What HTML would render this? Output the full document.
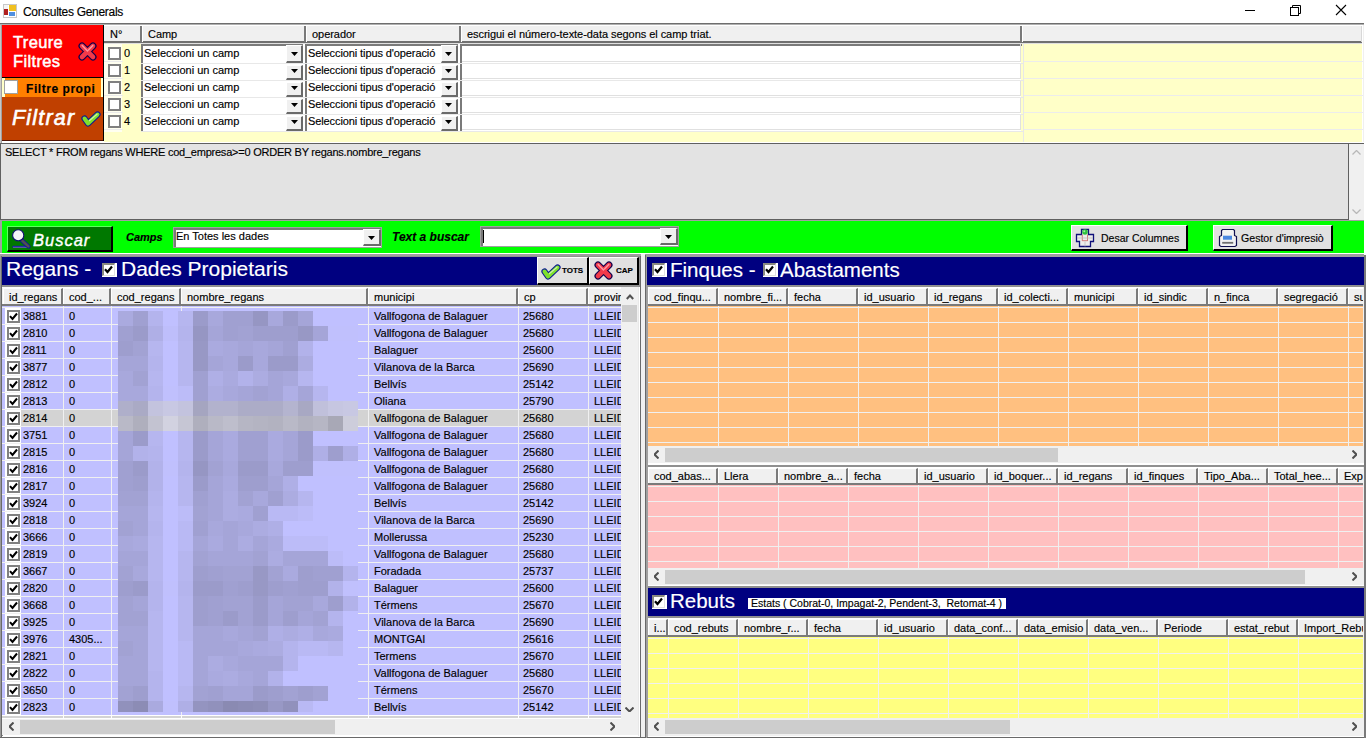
<!DOCTYPE html><html><head><meta charset="utf-8"><style>
*{margin:0;padding:0;box-sizing:border-box}
html,body{width:1366px;height:738px;overflow:hidden;background:#fff;position:relative;font-family:"Liberation Sans", sans-serif;font-size:11px;color:#000}
div{position:absolute}
.t{white-space:nowrap;line-height:1;-webkit-text-stroke:0.15px currentColor}
</style></head><body><svg style="position:absolute;left:3px;top:4px" width="15" height="14" viewBox="0 0 15 14"><rect x="0.5" y="0.5" width="13" height="13" fill="#fff" stroke="#c8c8c8"/><rect x="1" y="1" width="4" height="4" fill="#f4f4f4"/><rect x="6" y="1" width="7" height="6" fill="#f0c020"/><rect x="1" y="5" width="4" height="6" fill="#b02020"/><rect x="6" y="8" width="6" height="4" fill="#5090e0"/></svg>
<div class="t" style="left:23px;top:6px;font-size:12px;letter-spacing:-0.3px">Consultes Generals</div>
<svg style="position:absolute;left:1240px;top:3px" width="120" height="16" viewBox="0 0 120 16"><line x1="5" y1="7.5" x2="15" y2="7.5" stroke="#000"/><rect x="50.5" y="4.5" width="8" height="8" fill="none" stroke="#000"/><path d="M52.5 4.5V2.5H60.5V10.5H58.5" fill="none" stroke="#000"/><path d="M96 2L106 12M106 2L96 12" stroke="#000" stroke-width="1.1"/></svg>
<div style="left:0px;top:23px;width:1364px;height:1px;background:#6e6e6e;"></div>
<div style="left:0px;top:24px;width:1364px;height:1px;background:#b0b0b0;"></div>
<div style="left:0px;top:25px;width:1px;height:118px;background:#c8c8c8;"></div>
<div style="left:1px;top:25px;width:1px;height:118px;background:#a0a0a0;"></div>
<div style="left:2px;top:25px;width:101px;height:52px;background:#ff0000;"></div>
<div class="t" style="left:13px;top:34px;font-size:16.5px;letter-spacing:0.35px;color:#fff;-webkit-text-stroke:0.5px #fff">Treure</div>
<div class="t" style="left:13px;top:53px;font-size:16.5px;letter-spacing:0.35px;color:#fff;-webkit-text-stroke:0.5px #fff">Filtres</div>
<svg style="position:absolute;left:78px;top:42px" width="19" height="19" viewBox="0 0 19 19"><g stroke-linecap="round"><path d="M4 4L15 15M15 4L4 15" stroke="#14004a" stroke-width="7"/><path d="M4 4L15 15M15 4L4 15" stroke="#f23a4a" stroke-width="4.6"/><path d="M4.2 3.6L9.5 8.9M14.8 3.6L10.5 7.9" stroke="#ff9aa4" stroke-width="1.4"/></g></svg>
<div style="left:103px;top:25px;width:1px;height:117px;background:#000;"></div>
<div style="left:2px;top:77px;width:101px;height:1px;background:#000;"></div>
<div style="left:2px;top:78px;width:101px;height:19px;background:#ffffc8;"></div>
<div style="left:5px;top:78px;width:96px;height:19px;background:#ff8000;"></div>
<div style="left:4px;top:80px;width:14px;height:14px;background:#fff;border:1px solid #a0a0a0"></div>
<div class="t" style="left:26px;top:83px;font-size:12px;font-weight:bold;letter-spacing:0.55px">Filtre propi</div>
<div style="left:2px;top:97px;width:101px;height:43px;background:#c04000;"></div>
<div style="left:2px;top:140px;width:101px;height:1px;background:#501000;"></div>
<div style="left:2px;top:141px;width:102px;height:2px;background:#fff;"></div>
<div class="t" style="left:12px;top:108px;font-size:21.5px;font-style:italic;letter-spacing:1.2px;color:#fff;-webkit-text-stroke:0.6px #fff">Filtrar</div>
<svg style="position:absolute;left:81px;top:111px" width="20" height="16" viewBox="0 0 20 16"><g stroke-linecap="round" stroke-linejoin="round" fill="none"><path d="M3.5 7.5L7 12.5L16.5 3.5" stroke="#0a1a90" stroke-width="6.2"/><path d="M3.5 7.5L7 12.5L16.5 3.5" stroke="#7ee02c" stroke-width="4"/><path d="M8.5 9.5L16 3.2" stroke="#c8f0a8" stroke-width="1.3"/></g></svg>
<div style="left:104px;top:25px;width:1260px;height:117px;background:#ffffc8;"></div>
<div style="left:1362px;top:25px;width:1px;height:117px;background:#fff;"></div>
<div style="left:1363px;top:25px;width:1px;height:117px;background:#f0f0f0;"></div>
<div style="left:104px;top:25px;width:1258px;height:17px;background:#f0f0f0;"></div>
<div style="left:104px;top:25px;width:1258px;height:1px;background:#fff;"></div>
<div style="left:104px;top:41px;width:1258px;height:2px;background:#707070;"></div>
<div style="left:104px;top:43px;width:1258px;height:1px;background:#e0e0e0;"></div>
<div style="left:140px;top:26px;width:2px;height:16px;background:#7a7a7a;"></div>
<div style="left:142px;top:26px;width:1px;height:16px;background:#fff;"></div>
<div class="t" style="left:110px;top:29px;letter-spacing:-0.05px">N°</div>
<div style="left:304px;top:26px;width:2px;height:16px;background:#7a7a7a;"></div>
<div style="left:306px;top:26px;width:1px;height:16px;background:#fff;"></div>
<div class="t" style="left:148px;top:29px;letter-spacing:-0.05px">Camp</div>
<div style="left:459px;top:26px;width:2px;height:16px;background:#7a7a7a;"></div>
<div style="left:461px;top:26px;width:1px;height:16px;background:#fff;"></div>
<div class="t" style="left:312px;top:29px;letter-spacing:-0.05px">operador</div>
<div style="left:1020px;top:26px;width:2px;height:16px;background:#7a7a7a;"></div>
<div style="left:1022px;top:26px;width:1px;height:16px;background:#fff;"></div>
<div class="t" style="left:467px;top:29px;letter-spacing:-0.05px">escrigui el número-texte-data segons el camp triat.</div>
<div style="left:1361px;top:26px;width:1px;height:16px;background:#d8d8d8;"></div>
<div style="left:104px;top:44px;width:18px;height:88px;background:#fffff0;"></div>
<div style="left:104px;top:61px;width:19px;height:1px;background:#ececec;"></div>
<div style="left:1023px;top:61px;width:340px;height:1px;background:#ececec;"></div>
<div style="left:108px;top:47px;width:13px;height:13px;background:#fff;border:2px solid #808080"></div>
<div class="t" style="left:124px;top:48px;">0</div>
<div style="left:141px;top:44px;width:880px;height:19px;background:#fff;"></div>
<div style="left:141px;top:63px;width:882px;height:1px;background:#e8e8e8;"></div>
<div style="left:141px;top:44px;width:2px;height:19px;background:#7a7a7a;"></div>
<div style="left:141px;top:44px;width:162px;height:2px;background:#7a7a7a;"></div>
<div class="t" style="left:144px;top:48px;">Seleccioni un camp</div>
<div style="left:286px;top:45px;width:17px;height:18px;background:#f0f0f0;border-top:1px solid #fff;border-left:1px solid #fff;border-right:2px solid #6a6a6a;border-bottom:2px solid #6a6a6a"></div>
<svg style="position:absolute;left:291px;top:52px" width="7" height="4" viewBox="0 0 7 4"><path d="M0 0H7L3.5 4Z" fill="#000"/></svg>
<div style="left:305px;top:44px;width:2px;height:19px;background:#7a7a7a;"></div>
<div style="left:305px;top:44px;width:153px;height:2px;background:#7a7a7a;"></div>
<div class="t" style="left:308px;top:48px;letter-spacing:-0.1px">Seleccioni tipus d'operació</div>
<div style="left:441px;top:45px;width:17px;height:18px;background:#f0f0f0;border-top:1px solid #fff;border-left:1px solid #fff;border-right:2px solid #6a6a6a;border-bottom:2px solid #6a6a6a"></div>
<svg style="position:absolute;left:445px;top:52px" width="7" height="4" viewBox="0 0 7 4"><path d="M0 0H7L3.5 4Z" fill="#000"/></svg>
<div style="left:460px;top:44px;width:2px;height:19px;background:#7a7a7a;"></div>
<div style="left:460px;top:44px;width:562px;height:2px;background:#7a7a7a;"></div>
<div style="left:1020px;top:44px;width:1px;height:18px;background:#e0e0e0;"></div>
<div style="left:462px;top:61px;width:559px;height:1px;background:#e0e0e0;"></div>
<div style="left:104px;top:78px;width:19px;height:1px;background:#ececec;"></div>
<div style="left:1023px;top:78px;width:340px;height:1px;background:#ececec;"></div>
<div style="left:108px;top:64px;width:13px;height:13px;background:#fff;border:2px solid #808080"></div>
<div class="t" style="left:124px;top:65px;">1</div>
<div style="left:141px;top:64px;width:880px;height:16px;background:#fff;"></div>
<div style="left:141px;top:80px;width:882px;height:1px;background:#e8e8e8;"></div>
<div style="left:141px;top:64px;width:2px;height:16px;background:#7a7a7a;"></div>
<div class="t" style="left:144px;top:65px;">Seleccioni un camp</div>
<div style="left:286px;top:65px;width:17px;height:15px;background:#f0f0f0;border-top:1px solid #fff;border-left:1px solid #fff;border-right:2px solid #6a6a6a;border-bottom:2px solid #6a6a6a"></div>
<svg style="position:absolute;left:291px;top:69px" width="7" height="4" viewBox="0 0 7 4"><path d="M0 0H7L3.5 4Z" fill="#000"/></svg>
<div style="left:305px;top:64px;width:2px;height:16px;background:#7a7a7a;"></div>
<div class="t" style="left:308px;top:65px;letter-spacing:-0.1px">Seleccioni tipus d'operació</div>
<div style="left:441px;top:65px;width:17px;height:15px;background:#f0f0f0;border-top:1px solid #fff;border-left:1px solid #fff;border-right:2px solid #6a6a6a;border-bottom:2px solid #6a6a6a"></div>
<svg style="position:absolute;left:445px;top:69px" width="7" height="4" viewBox="0 0 7 4"><path d="M0 0H7L3.5 4Z" fill="#000"/></svg>
<div style="left:460px;top:64px;width:2px;height:16px;background:#7a7a7a;"></div>
<div style="left:1020px;top:64px;width:1px;height:15px;background:#e0e0e0;"></div>
<div style="left:462px;top:78px;width:559px;height:1px;background:#e0e0e0;"></div>
<div style="left:104px;top:95px;width:19px;height:1px;background:#ececec;"></div>
<div style="left:1023px;top:95px;width:340px;height:1px;background:#ececec;"></div>
<div style="left:108px;top:81px;width:13px;height:13px;background:#fff;border:2px solid #808080"></div>
<div class="t" style="left:124px;top:82px;">2</div>
<div style="left:141px;top:81px;width:880px;height:16px;background:#fff;"></div>
<div style="left:141px;top:97px;width:882px;height:1px;background:#e8e8e8;"></div>
<div style="left:141px;top:81px;width:2px;height:16px;background:#7a7a7a;"></div>
<div class="t" style="left:144px;top:82px;">Seleccioni un camp</div>
<div style="left:286px;top:82px;width:17px;height:15px;background:#f0f0f0;border-top:1px solid #fff;border-left:1px solid #fff;border-right:2px solid #6a6a6a;border-bottom:2px solid #6a6a6a"></div>
<svg style="position:absolute;left:291px;top:86px" width="7" height="4" viewBox="0 0 7 4"><path d="M0 0H7L3.5 4Z" fill="#000"/></svg>
<div style="left:305px;top:81px;width:2px;height:16px;background:#7a7a7a;"></div>
<div class="t" style="left:308px;top:82px;letter-spacing:-0.1px">Seleccioni tipus d'operació</div>
<div style="left:441px;top:82px;width:17px;height:15px;background:#f0f0f0;border-top:1px solid #fff;border-left:1px solid #fff;border-right:2px solid #6a6a6a;border-bottom:2px solid #6a6a6a"></div>
<svg style="position:absolute;left:445px;top:86px" width="7" height="4" viewBox="0 0 7 4"><path d="M0 0H7L3.5 4Z" fill="#000"/></svg>
<div style="left:460px;top:81px;width:2px;height:16px;background:#7a7a7a;"></div>
<div style="left:1020px;top:81px;width:1px;height:15px;background:#e0e0e0;"></div>
<div style="left:462px;top:95px;width:559px;height:1px;background:#e0e0e0;"></div>
<div style="left:104px;top:112px;width:19px;height:1px;background:#ececec;"></div>
<div style="left:1023px;top:112px;width:340px;height:1px;background:#ececec;"></div>
<div style="left:108px;top:98px;width:13px;height:13px;background:#fff;border:2px solid #808080"></div>
<div class="t" style="left:124px;top:99px;">3</div>
<div style="left:141px;top:98px;width:880px;height:16px;background:#fff;"></div>
<div style="left:141px;top:114px;width:882px;height:1px;background:#e8e8e8;"></div>
<div style="left:141px;top:98px;width:2px;height:16px;background:#7a7a7a;"></div>
<div class="t" style="left:144px;top:99px;">Seleccioni un camp</div>
<div style="left:286px;top:99px;width:17px;height:15px;background:#f0f0f0;border-top:1px solid #fff;border-left:1px solid #fff;border-right:2px solid #6a6a6a;border-bottom:2px solid #6a6a6a"></div>
<svg style="position:absolute;left:291px;top:103px" width="7" height="4" viewBox="0 0 7 4"><path d="M0 0H7L3.5 4Z" fill="#000"/></svg>
<div style="left:305px;top:98px;width:2px;height:16px;background:#7a7a7a;"></div>
<div class="t" style="left:308px;top:99px;letter-spacing:-0.1px">Seleccioni tipus d'operació</div>
<div style="left:441px;top:99px;width:17px;height:15px;background:#f0f0f0;border-top:1px solid #fff;border-left:1px solid #fff;border-right:2px solid #6a6a6a;border-bottom:2px solid #6a6a6a"></div>
<svg style="position:absolute;left:445px;top:103px" width="7" height="4" viewBox="0 0 7 4"><path d="M0 0H7L3.5 4Z" fill="#000"/></svg>
<div style="left:460px;top:98px;width:2px;height:16px;background:#7a7a7a;"></div>
<div style="left:1020px;top:98px;width:1px;height:15px;background:#e0e0e0;"></div>
<div style="left:462px;top:112px;width:559px;height:1px;background:#e0e0e0;"></div>
<div style="left:104px;top:129px;width:19px;height:1px;background:#ececec;"></div>
<div style="left:1023px;top:129px;width:340px;height:1px;background:#ececec;"></div>
<div style="left:108px;top:115px;width:13px;height:13px;background:#fff;border:2px solid #808080"></div>
<div class="t" style="left:124px;top:116px;">4</div>
<div style="left:141px;top:115px;width:880px;height:16px;background:#fff;"></div>
<div style="left:141px;top:131px;width:882px;height:1px;background:#e8e8e8;"></div>
<div style="left:141px;top:115px;width:2px;height:16px;background:#7a7a7a;"></div>
<div class="t" style="left:144px;top:116px;">Seleccioni un camp</div>
<div style="left:286px;top:116px;width:17px;height:15px;background:#f0f0f0;border-top:1px solid #fff;border-left:1px solid #fff;border-right:2px solid #6a6a6a;border-bottom:2px solid #6a6a6a"></div>
<svg style="position:absolute;left:291px;top:120px" width="7" height="4" viewBox="0 0 7 4"><path d="M0 0H7L3.5 4Z" fill="#000"/></svg>
<div style="left:305px;top:115px;width:2px;height:16px;background:#7a7a7a;"></div>
<div class="t" style="left:308px;top:116px;letter-spacing:-0.1px">Seleccioni tipus d'operació</div>
<div style="left:441px;top:116px;width:17px;height:15px;background:#f0f0f0;border-top:1px solid #fff;border-left:1px solid #fff;border-right:2px solid #6a6a6a;border-bottom:2px solid #6a6a6a"></div>
<svg style="position:absolute;left:445px;top:120px" width="7" height="4" viewBox="0 0 7 4"><path d="M0 0H7L3.5 4Z" fill="#000"/></svg>
<div style="left:460px;top:115px;width:2px;height:16px;background:#7a7a7a;"></div>
<div style="left:1020px;top:115px;width:1px;height:15px;background:#e0e0e0;"></div>
<div style="left:462px;top:129px;width:559px;height:1px;background:#e0e0e0;"></div>
<div style="left:1023px;top:44px;width:1px;height:98px;background:#e8e8e8;"></div>
<div style="left:0px;top:143px;width:1364px;height:1px;background:#606060;"></div>
<div style="left:0px;top:144px;width:1px;height:76px;background:#606060;"></div>
<div style="left:1px;top:144px;width:1348px;height:75px;background:#e3e3e3;"></div>
<div style="left:1348px;top:144px;width:1px;height:75px;background:#606060;"></div>
<div style="left:1349px;top:144px;width:15px;height:76px;background:#f0f0f0;"></div>
<svg style="position:absolute;left:1352px;top:150px" width="9" height="5" viewBox="0 0 9 5"><path d="M0.5 4.5L4.5 0.5L8.5 4.5" fill="none" stroke="#b8b8b8" stroke-width="1.3"/></svg>
<svg style="position:absolute;left:1352px;top:209px" width="9" height="5" viewBox="0 0 9 5"><path d="M0.5 0.5L4.5 4.5L8.5 0.5" fill="none" stroke="#b8b8b8" stroke-width="1.3"/></svg>
<div style="left:1px;top:219px;width:1348px;height:1px;background:#606060;"></div>
<div class="t" style="left:5px;top:147px;letter-spacing:-0.23px">SELECT * FROM regans WHERE cod_empresa&gt;=0 ORDER BY regans.nombre_regans</div>
<div style="left:0px;top:220px;width:1364px;height:1px;background:#a0a0a0;"></div>
<div style="left:0px;top:221px;width:2px;height:32px;background:#a0a0a0;"></div>
<div style="left:2px;top:221px;width:1362px;height:32px;background:#00ff00;"></div>
<div style="left:0px;top:253px;width:1366px;height:1px;background:#fff;"></div>
<div style="left:7px;top:226px;width:106px;height:26px;background:#007800;border-top:1px solid #60ff60;border-left:1px solid #60ff60;border-right:2px solid #000;border-bottom:2px solid #000"></div>
<svg style="position:absolute;left:8px;top:226px" width="28" height="26" viewBox="0 0 28 26"><path d="M4.5 20.8H21" stroke="#1818b0" stroke-width="2"/><path d="M5 21.3H21" stroke="#8080a0" stroke-width="0.8"/><path d="M14 14.5L20.5 20.5" stroke="#1010a0" stroke-width="4.2" stroke-linecap="round"/><path d="M14 14.5L20.5 20.5" stroke="#505050" stroke-width="2.4" stroke-linecap="round"/><circle cx="10.2" cy="9.3" r="5.6" fill="#f4f4f8" stroke="#101070" stroke-width="1.1"/></svg>
<div class="t" style="left:33px;top:232px;font-size:16.5px;font-style:italic;color:#fff;letter-spacing:1px;-webkit-text-stroke:0.4px #fff">Buscar</div>
<div class="t" style="left:126px;top:232px;font-size:11px;font-style:italic;font-weight:bold">Camps</div>
<div style="left:173px;top:227px;width:209px;height:21px;background:#fff;border:1px solid #a0a0a0"></div>
<div style="left:174px;top:228px;width:207px;height:2px;background:#7a7a7a;"></div>
<div style="left:174px;top:228px;width:2px;height:19px;background:#7a7a7a;"></div>
<div class="t" style="left:176px;top:231px;">En Totes les dades</div>
<div style="left:363px;top:229px;width:18px;height:17px;background:#f0f0f0;border-top:1px solid #fff;border-left:1px solid #fff;border-right:2px solid #6a6a6a;border-bottom:2px solid #6a6a6a"></div>
<svg style="position:absolute;left:368px;top:236px" width="7" height="4" viewBox="0 0 7 4"><path d="M0 0H7L3.5 4Z" fill="#000"/></svg>
<div class="t" style="left:392px;top:231px;font-size:12px;font-style:italic;font-weight:bold">Text a buscar</div>
<div style="left:480px;top:226px;width:199px;height:21px;background:#fff;border:1px solid #a0a0a0"></div>
<div style="left:481px;top:227px;width:197px;height:2px;background:#7a7a7a;"></div>
<div style="left:481px;top:227px;width:2px;height:19px;background:#7a7a7a;"></div>
<div style="left:483px;top:230px;width:1px;height:13px;background:#000;"></div>
<div style="left:660px;top:228px;width:18px;height:17px;background:#f0f0f0;border-top:1px solid #fff;border-left:1px solid #fff;border-right:2px solid #6a6a6a;border-bottom:2px solid #6a6a6a"></div>
<svg style="position:absolute;left:665px;top:235px" width="7" height="4" viewBox="0 0 7 4"><path d="M0 0H7L3.5 4Z" fill="#000"/></svg>
<div style="left:1071px;top:225px;width:117px;height:26px;background:#e1e1e1;border-top:1px solid #fff;border-left:1px solid #fff;border-right:2px solid #000;border-bottom:2px solid #000"></div>
<svg style="position:absolute;left:1073px;top:227px" width="24" height="22" viewBox="0 0 24 22"><path d="M8.5 2.5H15.5V7.5H20.5V14.5H17.5V19.5H6.5V14.5H3.5V7.5H8.5Z" fill="#ececec" stroke="#10107a" stroke-width="1.3"/><path d="M9.3 7.5V14M14.5 7.5V14M9.3 13.7H14.5" stroke="#d07070" stroke-width="0.9" fill="none"/><path d="M12 14.5V19.5M4 11H20" stroke="#b8b8b8" stroke-width="0.7"/><circle cx="12" cy="5" r="2.8" fill="#30c040"/><circle cx="11.3" cy="4.3" r="1" fill="#a0f0a0"/></svg>
<div class="t" style="left:1101px;top:233px;font-size:10.5px">Desar Columnes</div>
<div style="left:1213px;top:225px;width:120px;height:26px;background:#e1e1e1;border-top:1px solid #fff;border-left:1px solid #fff;border-right:2px solid #000;border-bottom:2px solid #000"></div>
<svg style="position:absolute;left:1215px;top:227px" width="24" height="22" viewBox="0 0 24 22"><path d="M7.5 2.5H18.5L19.5 3.5V8.5L21.5 9.5V18.5L20 19.5H6L4.5 18.5V9.5L6.5 8.5V3.5Z" fill="#f2f2f2" stroke="#101050" stroke-width="1.2"/><rect x="8" y="8.7" width="9" height="4" fill="#4a88e0"/><rect x="7.2" y="14.9" width="11" height="1.8" fill="#707070"/></svg>
<div class="t" style="left:1241px;top:233px;font-size:10.6px">Gestor d'impresiò</div>
<div style="left:0px;top:254px;width:641px;height:2px;background:#a0a0a0;"></div>
<div style="left:0px;top:256px;width:2px;height:482px;background:#a0a0a0;"></div>
<div style="left:641px;top:254px;width:4px;height:484px;background:#f0f0f0;"></div>
<div style="left:2px;top:256px;width:638px;height:1px;background:#909090;"></div>
<div style="left:2px;top:257px;width:535px;height:28px;background:#000080;"></div>
<div class="t" style="left:6px;top:258px;font-size:21px;color:#fff">Regans - </div>
<div style="left:102px;top:263px;width:15px;height:14px;background:#fff;"></div>
<div style="left:102px;top:263px;width:13px;height:13px;background:#fff;border-top:2px solid #8a8a80;border-left:2px solid #8a8a80;border-right:1px solid #e0e0e0;border-bottom:1px solid #e0e0e0"></div>
<svg style="position:absolute;left:104px;top:265px" width="9" height="9" viewBox="0 0 9 9"><path d="M1 4.2L3.5 7L8 1.5" fill="none" stroke="#000" stroke-width="2.2"/></svg>
<div class="t" style="left:121px;top:258px;font-size:21px;color:#fff">Dades Propietaris</div>
<div style="left:537px;top:257px;width:52px;height:28px;background:#e1e1e1;border-top:1px solid #fff;border-left:1px solid #fff;border-right:2px solid #000;border-bottom:2px solid #000"></div>
<svg style="position:absolute;left:541px;top:264px" width="20" height="16" viewBox="0 0 20 16"><g stroke-linecap="round" stroke-linejoin="round" fill="none"><path d="M3.5 7.5L7 12.5L16.5 3.5" stroke="#0a1a90" stroke-width="6.2"/><path d="M3.5 7.5L7 12.5L16.5 3.5" stroke="#7ee02c" stroke-width="4"/><path d="M8.5 9.5L16 3.2" stroke="#c8f0a8" stroke-width="1.3"/></g></svg>
<div class="t" style="left:562px;top:267px;font-size:8px;font-weight:bold">TOTS</div>
<div style="left:589px;top:257px;width:50px;height:28px;background:#e1e1e1;border-top:1px solid #fff;border-left:1px solid #fff;border-right:2px solid #000;border-bottom:2px solid #000"></div>
<svg style="position:absolute;left:594px;top:261px" width="19" height="19" viewBox="0 0 19 19"><g stroke-linecap="round"><path d="M4 4L15 15M15 4L4 15" stroke="#14004a" stroke-width="7"/><path d="M4 4L15 15M15 4L4 15" stroke="#f23a4a" stroke-width="4.6"/><path d="M4.2 3.6L9.5 8.9M14.8 3.6L10.5 7.9" stroke="#ff9aa4" stroke-width="1.4"/></g></svg>
<div class="t" style="left:616px;top:267px;font-size:8px;font-weight:bold">CAP</div>
<div style="left:639px;top:257px;width:1px;height:28px;background:#909090;"></div>
<div style="left:2px;top:285px;width:638px;height:2px;background:#909090;"></div>
<div style="left:640px;top:256px;width:1px;height:482px;background:#6a6a6a;"></div>
<div style="left:0px;top:256px;width:1px;height:481px;background:#9a9a9a;"></div>
<div style="left:1px;top:256px;width:1px;height:481px;background:#6a6a6a;"></div>
<div style="left:2px;top:287px;width:1px;height:449px;background:#8a8a8a;"></div>
<div style="left:2px;top:287px;width:619px;height:19px;background:#f0f0f0;"></div>
<div style="left:2px;top:287px;width:619px;height:1px;background:#fff;"></div>
<div style="left:3px;top:288px;width:60px;height:17px;background:#f0f0f0;border-top:1px solid #fff;border-left:1px solid #fff;border-right:2px solid #7a7a7a"></div>
<div class="t" style="left:9px;top:292px;">id_regans</div>
<div style="left:63px;top:288px;width:48px;height:17px;background:#f0f0f0;border-top:1px solid #fff;border-left:1px solid #fff;border-right:2px solid #7a7a7a"></div>
<div class="t" style="left:69px;top:292px;">cod_...</div>
<div style="left:111px;top:288px;width:70px;height:17px;background:#f0f0f0;border-top:1px solid #fff;border-left:1px solid #fff;border-right:2px solid #7a7a7a"></div>
<div class="t" style="left:117px;top:292px;">cod_regans</div>
<div style="left:181px;top:288px;width:187px;height:17px;background:#f0f0f0;border-top:1px solid #fff;border-left:1px solid #fff;border-right:2px solid #7a7a7a"></div>
<div class="t" style="left:187px;top:292px;">nombre_regans</div>
<div style="left:368px;top:288px;width:150px;height:17px;background:#f0f0f0;border-top:1px solid #fff;border-left:1px solid #fff;border-right:2px solid #7a7a7a"></div>
<div class="t" style="left:374px;top:292px;">municipi</div>
<div style="left:518px;top:288px;width:70px;height:17px;background:#f0f0f0;border-top:1px solid #fff;border-left:1px solid #fff;border-right:2px solid #7a7a7a"></div>
<div class="t" style="left:524px;top:292px;">cp</div>
<div style="left:588px;top:288px;width:33px;height:17px;background:#f0f0f0;border-top:1px solid #fff;border-left:1px solid #fff"></div>
<div class="t" style="left:594px;top:292px;">provir</div>
<div style="left:2px;top:304px;width:619px;height:2px;background:#7a7a7a;"></div>
<div style="left:2px;top:306px;width:619px;height:412px;overflow:hidden;background:#c0c0ff">
<div style="left:0;top:1px;width:619px;height:1px;background:#f0f0f0"></div>
<div style="left:0;top:2px;width:619px;height:16px;background:#c0c0ff"></div>
<div style="left:0;top:2px;width:3px;height:16px;background:#c0c0ff"></div>
<div style="left:3px;top:2px;width:16px;height:16px;background:#fff"></div>
<div style="left:5px;top:4px;width:13px;height:13px;background:#fff;border:2px solid #808080"></div>
<svg style="position:absolute;left:7px;top:6px" width="9" height="9" viewBox="0 0 9 9"><path d="M1 4.2L3.5 7L8 1.5" fill="none" stroke="#000" stroke-width="2"/></svg>
<div class="t" style="left:21px;top:5px">3881</div>
<div class="t" style="left:67px;top:5px">0</div>
<div class="t" style="left:372px;top:5px">Vallfogona de Balaguer</div>
<div class="t" style="left:521px;top:5px">25680</div>
<div class="t" style="left:592px;top:5px">LLEIDA</div>
<div style="left:0;top:18px;width:619px;height:1px;background:#f0f0f0"></div>
<div style="left:0;top:19px;width:619px;height:16px;background:#c0c0ff"></div>
<div style="left:0;top:19px;width:3px;height:16px;background:#c0c0ff"></div>
<div style="left:3px;top:19px;width:16px;height:16px;background:#fff"></div>
<div style="left:5px;top:21px;width:13px;height:13px;background:#fff;border:2px solid #808080"></div>
<svg style="position:absolute;left:7px;top:23px" width="9" height="9" viewBox="0 0 9 9"><path d="M1 4.2L3.5 7L8 1.5" fill="none" stroke="#000" stroke-width="2"/></svg>
<div class="t" style="left:21px;top:22px">2810</div>
<div class="t" style="left:67px;top:22px">0</div>
<div class="t" style="left:372px;top:22px">Vallfogona de Balaguer</div>
<div class="t" style="left:521px;top:22px">25680</div>
<div class="t" style="left:592px;top:22px">LLEIDA</div>
<div style="left:0;top:35px;width:619px;height:1px;background:#f0f0f0"></div>
<div style="left:0;top:36px;width:619px;height:16px;background:#c0c0ff"></div>
<div style="left:0;top:36px;width:3px;height:16px;background:#c0c0ff"></div>
<div style="left:3px;top:36px;width:16px;height:16px;background:#fff"></div>
<div style="left:5px;top:38px;width:13px;height:13px;background:#fff;border:2px solid #808080"></div>
<svg style="position:absolute;left:7px;top:40px" width="9" height="9" viewBox="0 0 9 9"><path d="M1 4.2L3.5 7L8 1.5" fill="none" stroke="#000" stroke-width="2"/></svg>
<div class="t" style="left:21px;top:39px">2811</div>
<div class="t" style="left:67px;top:39px">0</div>
<div class="t" style="left:372px;top:39px">Balaguer</div>
<div class="t" style="left:521px;top:39px">25600</div>
<div class="t" style="left:592px;top:39px">LLEIDA</div>
<div style="left:0;top:52px;width:619px;height:1px;background:#f0f0f0"></div>
<div style="left:0;top:53px;width:619px;height:16px;background:#c0c0ff"></div>
<div style="left:0;top:53px;width:3px;height:16px;background:#c0c0ff"></div>
<div style="left:3px;top:53px;width:16px;height:16px;background:#fff"></div>
<div style="left:5px;top:55px;width:13px;height:13px;background:#fff;border:2px solid #808080"></div>
<svg style="position:absolute;left:7px;top:57px" width="9" height="9" viewBox="0 0 9 9"><path d="M1 4.2L3.5 7L8 1.5" fill="none" stroke="#000" stroke-width="2"/></svg>
<div class="t" style="left:21px;top:56px">3877</div>
<div class="t" style="left:67px;top:56px">0</div>
<div class="t" style="left:372px;top:56px">Vilanova de la Barca</div>
<div class="t" style="left:521px;top:56px">25690</div>
<div class="t" style="left:592px;top:56px">LLEIDA</div>
<div style="left:0;top:69px;width:619px;height:1px;background:#f0f0f0"></div>
<div style="left:0;top:70px;width:619px;height:16px;background:#c0c0ff"></div>
<div style="left:0;top:70px;width:3px;height:16px;background:#c0c0ff"></div>
<div style="left:3px;top:70px;width:16px;height:16px;background:#fff"></div>
<div style="left:5px;top:72px;width:13px;height:13px;background:#fff;border:2px solid #808080"></div>
<svg style="position:absolute;left:7px;top:74px" width="9" height="9" viewBox="0 0 9 9"><path d="M1 4.2L3.5 7L8 1.5" fill="none" stroke="#000" stroke-width="2"/></svg>
<div class="t" style="left:21px;top:73px">2812</div>
<div class="t" style="left:67px;top:73px">0</div>
<div class="t" style="left:372px;top:73px">Bellvís</div>
<div class="t" style="left:521px;top:73px">25142</div>
<div class="t" style="left:592px;top:73px">LLEIDA</div>
<div style="left:0;top:86px;width:619px;height:1px;background:#f0f0f0"></div>
<div style="left:0;top:87px;width:619px;height:16px;background:#c0c0ff"></div>
<div style="left:0;top:87px;width:3px;height:16px;background:#c0c0ff"></div>
<div style="left:3px;top:87px;width:16px;height:16px;background:#fff"></div>
<div style="left:5px;top:89px;width:13px;height:13px;background:#fff;border:2px solid #808080"></div>
<svg style="position:absolute;left:7px;top:91px" width="9" height="9" viewBox="0 0 9 9"><path d="M1 4.2L3.5 7L8 1.5" fill="none" stroke="#000" stroke-width="2"/></svg>
<div class="t" style="left:21px;top:90px">2813</div>
<div class="t" style="left:67px;top:90px">0</div>
<div class="t" style="left:372px;top:90px">Oliana</div>
<div class="t" style="left:521px;top:90px">25790</div>
<div class="t" style="left:592px;top:90px">LLEIDA</div>
<div style="left:0;top:103px;width:619px;height:1px;background:#f0f0f0"></div>
<div style="left:0;top:104px;width:619px;height:16px;background:#d3d3d3"></div>
<div style="left:0;top:104px;width:3px;height:16px;background:#c0c0ff"></div>
<div style="left:3px;top:104px;width:16px;height:16px;background:#fff"></div>
<div style="left:5px;top:106px;width:13px;height:13px;background:#fff;border:2px solid #808080"></div>
<svg style="position:absolute;left:7px;top:108px" width="9" height="9" viewBox="0 0 9 9"><path d="M1 4.2L3.5 7L8 1.5" fill="none" stroke="#000" stroke-width="2"/></svg>
<div class="t" style="left:21px;top:107px">2814</div>
<div class="t" style="left:67px;top:107px">0</div>
<div class="t" style="left:372px;top:107px">Vallfogona de Balaguer</div>
<div class="t" style="left:521px;top:107px">25680</div>
<div class="t" style="left:592px;top:107px">LLEIDA</div>
<div style="left:0;top:120px;width:619px;height:1px;background:#f0f0f0"></div>
<div style="left:0;top:121px;width:619px;height:16px;background:#c0c0ff"></div>
<div style="left:0;top:121px;width:3px;height:16px;background:#c0c0ff"></div>
<div style="left:3px;top:121px;width:16px;height:16px;background:#fff"></div>
<div style="left:5px;top:123px;width:13px;height:13px;background:#fff;border:2px solid #808080"></div>
<svg style="position:absolute;left:7px;top:125px" width="9" height="9" viewBox="0 0 9 9"><path d="M1 4.2L3.5 7L8 1.5" fill="none" stroke="#000" stroke-width="2"/></svg>
<div class="t" style="left:21px;top:124px">3751</div>
<div class="t" style="left:67px;top:124px">0</div>
<div class="t" style="left:372px;top:124px">Vallfogona de Balaguer</div>
<div class="t" style="left:521px;top:124px">25680</div>
<div class="t" style="left:592px;top:124px">LLEIDA</div>
<div style="left:0;top:137px;width:619px;height:1px;background:#f0f0f0"></div>
<div style="left:0;top:138px;width:619px;height:16px;background:#c0c0ff"></div>
<div style="left:0;top:138px;width:3px;height:16px;background:#c0c0ff"></div>
<div style="left:3px;top:138px;width:16px;height:16px;background:#fff"></div>
<div style="left:5px;top:140px;width:13px;height:13px;background:#fff;border:2px solid #808080"></div>
<svg style="position:absolute;left:7px;top:142px" width="9" height="9" viewBox="0 0 9 9"><path d="M1 4.2L3.5 7L8 1.5" fill="none" stroke="#000" stroke-width="2"/></svg>
<div class="t" style="left:21px;top:141px">2815</div>
<div class="t" style="left:67px;top:141px">0</div>
<div class="t" style="left:372px;top:141px">Vallfogona de Balaguer</div>
<div class="t" style="left:521px;top:141px">25680</div>
<div class="t" style="left:592px;top:141px">LLEIDA</div>
<div style="left:0;top:154px;width:619px;height:1px;background:#f0f0f0"></div>
<div style="left:0;top:155px;width:619px;height:16px;background:#c0c0ff"></div>
<div style="left:0;top:155px;width:3px;height:16px;background:#c0c0ff"></div>
<div style="left:3px;top:155px;width:16px;height:16px;background:#fff"></div>
<div style="left:5px;top:157px;width:13px;height:13px;background:#fff;border:2px solid #808080"></div>
<svg style="position:absolute;left:7px;top:159px" width="9" height="9" viewBox="0 0 9 9"><path d="M1 4.2L3.5 7L8 1.5" fill="none" stroke="#000" stroke-width="2"/></svg>
<div class="t" style="left:21px;top:158px">2816</div>
<div class="t" style="left:67px;top:158px">0</div>
<div class="t" style="left:372px;top:158px">Vallfogona de Balaguer</div>
<div class="t" style="left:521px;top:158px">25680</div>
<div class="t" style="left:592px;top:158px">LLEIDA</div>
<div style="left:0;top:171px;width:619px;height:1px;background:#f0f0f0"></div>
<div style="left:0;top:172px;width:619px;height:16px;background:#c0c0ff"></div>
<div style="left:0;top:172px;width:3px;height:16px;background:#c0c0ff"></div>
<div style="left:3px;top:172px;width:16px;height:16px;background:#fff"></div>
<div style="left:5px;top:174px;width:13px;height:13px;background:#fff;border:2px solid #808080"></div>
<svg style="position:absolute;left:7px;top:176px" width="9" height="9" viewBox="0 0 9 9"><path d="M1 4.2L3.5 7L8 1.5" fill="none" stroke="#000" stroke-width="2"/></svg>
<div class="t" style="left:21px;top:175px">2817</div>
<div class="t" style="left:67px;top:175px">0</div>
<div class="t" style="left:372px;top:175px">Vallfogona de Balaguer</div>
<div class="t" style="left:521px;top:175px">25680</div>
<div class="t" style="left:592px;top:175px">LLEIDA</div>
<div style="left:0;top:188px;width:619px;height:1px;background:#f0f0f0"></div>
<div style="left:0;top:189px;width:619px;height:16px;background:#c0c0ff"></div>
<div style="left:0;top:189px;width:3px;height:16px;background:#c0c0ff"></div>
<div style="left:3px;top:189px;width:16px;height:16px;background:#fff"></div>
<div style="left:5px;top:191px;width:13px;height:13px;background:#fff;border:2px solid #808080"></div>
<svg style="position:absolute;left:7px;top:193px" width="9" height="9" viewBox="0 0 9 9"><path d="M1 4.2L3.5 7L8 1.5" fill="none" stroke="#000" stroke-width="2"/></svg>
<div class="t" style="left:21px;top:192px">3924</div>
<div class="t" style="left:67px;top:192px">0</div>
<div class="t" style="left:372px;top:192px">Bellvís</div>
<div class="t" style="left:521px;top:192px">25142</div>
<div class="t" style="left:592px;top:192px">LLEIDA</div>
<div style="left:0;top:205px;width:619px;height:1px;background:#f0f0f0"></div>
<div style="left:0;top:206px;width:619px;height:16px;background:#c0c0ff"></div>
<div style="left:0;top:206px;width:3px;height:16px;background:#c0c0ff"></div>
<div style="left:3px;top:206px;width:16px;height:16px;background:#fff"></div>
<div style="left:5px;top:208px;width:13px;height:13px;background:#fff;border:2px solid #808080"></div>
<svg style="position:absolute;left:7px;top:210px" width="9" height="9" viewBox="0 0 9 9"><path d="M1 4.2L3.5 7L8 1.5" fill="none" stroke="#000" stroke-width="2"/></svg>
<div class="t" style="left:21px;top:209px">2818</div>
<div class="t" style="left:67px;top:209px">0</div>
<div class="t" style="left:372px;top:209px">Vilanova de la Barca</div>
<div class="t" style="left:521px;top:209px">25690</div>
<div class="t" style="left:592px;top:209px">LLEIDA</div>
<div style="left:0;top:222px;width:619px;height:1px;background:#f0f0f0"></div>
<div style="left:0;top:223px;width:619px;height:16px;background:#c0c0ff"></div>
<div style="left:0;top:223px;width:3px;height:16px;background:#c0c0ff"></div>
<div style="left:3px;top:223px;width:16px;height:16px;background:#fff"></div>
<div style="left:5px;top:225px;width:13px;height:13px;background:#fff;border:2px solid #808080"></div>
<svg style="position:absolute;left:7px;top:227px" width="9" height="9" viewBox="0 0 9 9"><path d="M1 4.2L3.5 7L8 1.5" fill="none" stroke="#000" stroke-width="2"/></svg>
<div class="t" style="left:21px;top:226px">3666</div>
<div class="t" style="left:67px;top:226px">0</div>
<div class="t" style="left:372px;top:226px">Mollerussa</div>
<div class="t" style="left:521px;top:226px">25230</div>
<div class="t" style="left:592px;top:226px">LLEIDA</div>
<div style="left:0;top:239px;width:619px;height:1px;background:#f0f0f0"></div>
<div style="left:0;top:240px;width:619px;height:16px;background:#c0c0ff"></div>
<div style="left:0;top:240px;width:3px;height:16px;background:#c0c0ff"></div>
<div style="left:3px;top:240px;width:16px;height:16px;background:#fff"></div>
<div style="left:5px;top:242px;width:13px;height:13px;background:#fff;border:2px solid #808080"></div>
<svg style="position:absolute;left:7px;top:244px" width="9" height="9" viewBox="0 0 9 9"><path d="M1 4.2L3.5 7L8 1.5" fill="none" stroke="#000" stroke-width="2"/></svg>
<div class="t" style="left:21px;top:243px">2819</div>
<div class="t" style="left:67px;top:243px">0</div>
<div class="t" style="left:372px;top:243px">Vallfogona de Balaguer</div>
<div class="t" style="left:521px;top:243px">25680</div>
<div class="t" style="left:592px;top:243px">LLEIDA</div>
<div style="left:0;top:256px;width:619px;height:1px;background:#f0f0f0"></div>
<div style="left:0;top:257px;width:619px;height:16px;background:#c0c0ff"></div>
<div style="left:0;top:257px;width:3px;height:16px;background:#c0c0ff"></div>
<div style="left:3px;top:257px;width:16px;height:16px;background:#fff"></div>
<div style="left:5px;top:259px;width:13px;height:13px;background:#fff;border:2px solid #808080"></div>
<svg style="position:absolute;left:7px;top:261px" width="9" height="9" viewBox="0 0 9 9"><path d="M1 4.2L3.5 7L8 1.5" fill="none" stroke="#000" stroke-width="2"/></svg>
<div class="t" style="left:21px;top:260px">3667</div>
<div class="t" style="left:67px;top:260px">0</div>
<div class="t" style="left:372px;top:260px">Foradada</div>
<div class="t" style="left:521px;top:260px">25737</div>
<div class="t" style="left:592px;top:260px">LLEIDA</div>
<div style="left:0;top:273px;width:619px;height:1px;background:#f0f0f0"></div>
<div style="left:0;top:274px;width:619px;height:16px;background:#c0c0ff"></div>
<div style="left:0;top:274px;width:3px;height:16px;background:#c0c0ff"></div>
<div style="left:3px;top:274px;width:16px;height:16px;background:#fff"></div>
<div style="left:5px;top:276px;width:13px;height:13px;background:#fff;border:2px solid #808080"></div>
<svg style="position:absolute;left:7px;top:278px" width="9" height="9" viewBox="0 0 9 9"><path d="M1 4.2L3.5 7L8 1.5" fill="none" stroke="#000" stroke-width="2"/></svg>
<div class="t" style="left:21px;top:277px">2820</div>
<div class="t" style="left:67px;top:277px">0</div>
<div class="t" style="left:372px;top:277px">Balaguer</div>
<div class="t" style="left:521px;top:277px">25600</div>
<div class="t" style="left:592px;top:277px">LLEIDA</div>
<div style="left:0;top:290px;width:619px;height:1px;background:#f0f0f0"></div>
<div style="left:0;top:291px;width:619px;height:16px;background:#c0c0ff"></div>
<div style="left:0;top:291px;width:3px;height:16px;background:#c0c0ff"></div>
<div style="left:3px;top:291px;width:16px;height:16px;background:#fff"></div>
<div style="left:5px;top:293px;width:13px;height:13px;background:#fff;border:2px solid #808080"></div>
<svg style="position:absolute;left:7px;top:295px" width="9" height="9" viewBox="0 0 9 9"><path d="M1 4.2L3.5 7L8 1.5" fill="none" stroke="#000" stroke-width="2"/></svg>
<div class="t" style="left:21px;top:294px">3668</div>
<div class="t" style="left:67px;top:294px">0</div>
<div class="t" style="left:372px;top:294px">Térmens</div>
<div class="t" style="left:521px;top:294px">25670</div>
<div class="t" style="left:592px;top:294px">LLEIDA</div>
<div style="left:0;top:307px;width:619px;height:1px;background:#f0f0f0"></div>
<div style="left:0;top:308px;width:619px;height:16px;background:#c0c0ff"></div>
<div style="left:0;top:308px;width:3px;height:16px;background:#c0c0ff"></div>
<div style="left:3px;top:308px;width:16px;height:16px;background:#fff"></div>
<div style="left:5px;top:310px;width:13px;height:13px;background:#fff;border:2px solid #808080"></div>
<svg style="position:absolute;left:7px;top:312px" width="9" height="9" viewBox="0 0 9 9"><path d="M1 4.2L3.5 7L8 1.5" fill="none" stroke="#000" stroke-width="2"/></svg>
<div class="t" style="left:21px;top:311px">3925</div>
<div class="t" style="left:67px;top:311px">0</div>
<div class="t" style="left:372px;top:311px">Vilanova de la Barca</div>
<div class="t" style="left:521px;top:311px">25690</div>
<div class="t" style="left:592px;top:311px">LLEIDA</div>
<div style="left:0;top:324px;width:619px;height:1px;background:#f0f0f0"></div>
<div style="left:0;top:325px;width:619px;height:16px;background:#c0c0ff"></div>
<div style="left:0;top:325px;width:3px;height:16px;background:#c0c0ff"></div>
<div style="left:3px;top:325px;width:16px;height:16px;background:#fff"></div>
<div style="left:5px;top:327px;width:13px;height:13px;background:#fff;border:2px solid #808080"></div>
<svg style="position:absolute;left:7px;top:329px" width="9" height="9" viewBox="0 0 9 9"><path d="M1 4.2L3.5 7L8 1.5" fill="none" stroke="#000" stroke-width="2"/></svg>
<div class="t" style="left:21px;top:328px">3976</div>
<div class="t" style="left:67px;top:328px">4305...</div>
<div class="t" style="left:372px;top:328px">MONTGAI</div>
<div class="t" style="left:521px;top:328px">25616</div>
<div class="t" style="left:592px;top:328px">LLEIDA</div>
<div style="left:0;top:341px;width:619px;height:1px;background:#f0f0f0"></div>
<div style="left:0;top:342px;width:619px;height:16px;background:#c0c0ff"></div>
<div style="left:0;top:342px;width:3px;height:16px;background:#c0c0ff"></div>
<div style="left:3px;top:342px;width:16px;height:16px;background:#fff"></div>
<div style="left:5px;top:344px;width:13px;height:13px;background:#fff;border:2px solid #808080"></div>
<svg style="position:absolute;left:7px;top:346px" width="9" height="9" viewBox="0 0 9 9"><path d="M1 4.2L3.5 7L8 1.5" fill="none" stroke="#000" stroke-width="2"/></svg>
<div class="t" style="left:21px;top:345px">2821</div>
<div class="t" style="left:67px;top:345px">0</div>
<div class="t" style="left:372px;top:345px">Termens</div>
<div class="t" style="left:521px;top:345px">25670</div>
<div class="t" style="left:592px;top:345px">LLEIDA</div>
<div style="left:0;top:358px;width:619px;height:1px;background:#f0f0f0"></div>
<div style="left:0;top:359px;width:619px;height:16px;background:#c0c0ff"></div>
<div style="left:0;top:359px;width:3px;height:16px;background:#c0c0ff"></div>
<div style="left:3px;top:359px;width:16px;height:16px;background:#fff"></div>
<div style="left:5px;top:361px;width:13px;height:13px;background:#fff;border:2px solid #808080"></div>
<svg style="position:absolute;left:7px;top:363px" width="9" height="9" viewBox="0 0 9 9"><path d="M1 4.2L3.5 7L8 1.5" fill="none" stroke="#000" stroke-width="2"/></svg>
<div class="t" style="left:21px;top:362px">2822</div>
<div class="t" style="left:67px;top:362px">0</div>
<div class="t" style="left:372px;top:362px">Vallfogona de Balaguer</div>
<div class="t" style="left:521px;top:362px">25680</div>
<div class="t" style="left:592px;top:362px">LLEIDA</div>
<div style="left:0;top:375px;width:619px;height:1px;background:#f0f0f0"></div>
<div style="left:0;top:376px;width:619px;height:16px;background:#c0c0ff"></div>
<div style="left:0;top:376px;width:3px;height:16px;background:#c0c0ff"></div>
<div style="left:3px;top:376px;width:16px;height:16px;background:#fff"></div>
<div style="left:5px;top:378px;width:13px;height:13px;background:#fff;border:2px solid #808080"></div>
<svg style="position:absolute;left:7px;top:380px" width="9" height="9" viewBox="0 0 9 9"><path d="M1 4.2L3.5 7L8 1.5" fill="none" stroke="#000" stroke-width="2"/></svg>
<div class="t" style="left:21px;top:379px">3650</div>
<div class="t" style="left:67px;top:379px">0</div>
<div class="t" style="left:372px;top:379px">Térmens</div>
<div class="t" style="left:521px;top:379px">25670</div>
<div class="t" style="left:592px;top:379px">LLEIDA</div>
<div style="left:0;top:392px;width:619px;height:1px;background:#f0f0f0"></div>
<div style="left:0;top:393px;width:619px;height:16px;background:#c0c0ff"></div>
<div style="left:0;top:393px;width:3px;height:16px;background:#c0c0ff"></div>
<div style="left:3px;top:393px;width:16px;height:16px;background:#fff"></div>
<div style="left:5px;top:395px;width:13px;height:13px;background:#fff;border:2px solid #808080"></div>
<svg style="position:absolute;left:7px;top:397px" width="9" height="9" viewBox="0 0 9 9"><path d="M1 4.2L3.5 7L8 1.5" fill="none" stroke="#000" stroke-width="2"/></svg>
<div class="t" style="left:21px;top:396px">2823</div>
<div class="t" style="left:67px;top:396px">0</div>
<div class="t" style="left:372px;top:396px">Bellvís</div>
<div class="t" style="left:521px;top:396px">25142</div>
<div class="t" style="left:592px;top:396px">LLEIDA</div>
<div style="left:0;top:409px;width:619px;height:1px;background:#f0f0f0"></div>
<div style="left:0;top:410px;width:619px;height:16px;background:#c0c0ff"></div>
<div style="left:0;top:410px;width:3px;height:16px;background:#c0c0ff"></div>
<div style="left:3px;top:410px;width:16px;height:16px;background:#fff"></div>
<div style="left:61px;top:0;width:1px;height:412px;background:#f0f0f0"></div>
<div style="left:109px;top:0;width:1px;height:412px;background:#f0f0f0"></div>
<div style="left:179px;top:0;width:1px;height:412px;background:#f0f0f0"></div>
<div style="left:366px;top:0;width:1px;height:412px;background:#f0f0f0"></div>
<div style="left:516px;top:0;width:1px;height:412px;background:#f0f0f0"></div>
<div style="left:586px;top:0;width:1px;height:412px;background:#f0f0f0"></div>
<div style="left:116px;top:5px;width:15px;height:15px;background:rgb(170, 170, 223)"></div>
<div style="left:131px;top:5px;width:15px;height:15px;background:rgb(160, 160, 209)"></div>
<div style="left:146px;top:5px;width:15px;height:15px;background:rgb(180, 180, 237)"></div>
<div style="left:161px;top:5px;width:15px;height:15px;background:rgb(192, 192, 255)"></div>
<div style="left:176px;top:5px;width:15px;height:15px;background:rgb(182, 182, 239)"></div>
<div style="left:191px;top:5px;width:15px;height:15px;background:rgb(155, 155, 202)"></div>
<div style="left:206px;top:5px;width:15px;height:15px;background:rgb(168, 168, 220)"></div>
<div style="left:221px;top:5px;width:15px;height:15px;background:rgb(160, 160, 209)"></div>
<div style="left:236px;top:5px;width:15px;height:15px;background:rgb(160, 160, 209)"></div>
<div style="left:251px;top:5px;width:15px;height:15px;background:rgb(150, 150, 195)"></div>
<div style="left:266px;top:5px;width:15px;height:15px;background:rgb(168, 168, 220)"></div>
<div style="left:281px;top:5px;width:15px;height:15px;background:rgb(155, 155, 202)"></div>
<div style="left:296px;top:5px;width:15px;height:15px;background:rgb(165, 165, 216)"></div>
<div style="left:311px;top:5px;width:15px;height:15px;background:rgb(192, 192, 255)"></div>
<div style="left:326px;top:5px;width:15px;height:15px;background:rgb(192, 192, 255)"></div>
<div style="left:341px;top:5px;width:15px;height:15px;background:rgb(192, 192, 255)"></div>
<div style="left:116px;top:20px;width:15px;height:15px;background:rgb(160, 160, 209)"></div>
<div style="left:131px;top:20px;width:15px;height:15px;background:rgb(155, 155, 202)"></div>
<div style="left:146px;top:20px;width:15px;height:15px;background:rgb(175, 175, 230)"></div>
<div style="left:161px;top:20px;width:15px;height:15px;background:rgb(190, 190, 251)"></div>
<div style="left:176px;top:20px;width:15px;height:15px;background:rgb(180, 180, 237)"></div>
<div style="left:191px;top:20px;width:15px;height:15px;background:rgb(150, 150, 195)"></div>
<div style="left:206px;top:20px;width:15px;height:15px;background:rgb(165, 165, 216)"></div>
<div style="left:221px;top:20px;width:15px;height:15px;background:rgb(160, 160, 209)"></div>
<div style="left:236px;top:20px;width:15px;height:15px;background:rgb(162, 162, 211)"></div>
<div style="left:251px;top:20px;width:15px;height:15px;background:rgb(158, 158, 206)"></div>
<div style="left:266px;top:20px;width:15px;height:15px;background:rgb(158, 158, 206)"></div>
<div style="left:281px;top:20px;width:15px;height:15px;background:rgb(158, 158, 206)"></div>
<div style="left:296px;top:20px;width:15px;height:15px;background:rgb(152, 152, 197)"></div>
<div style="left:311px;top:20px;width:15px;height:15px;background:rgb(165, 165, 216)"></div>
<div style="left:326px;top:20px;width:15px;height:15px;background:rgb(192, 192, 253)"></div>
<div style="left:341px;top:20px;width:15px;height:15px;background:rgb(192, 192, 253)"></div>
<div style="left:116px;top:35px;width:15px;height:15px;background:rgb(158, 158, 206)"></div>
<div style="left:131px;top:35px;width:15px;height:15px;background:rgb(162, 162, 211)"></div>
<div style="left:146px;top:35px;width:15px;height:15px;background:rgb(182, 182, 239)"></div>
<div style="left:161px;top:35px;width:15px;height:15px;background:rgb(192, 192, 255)"></div>
<div style="left:176px;top:35px;width:15px;height:15px;background:rgb(182, 182, 239)"></div>
<div style="left:191px;top:35px;width:15px;height:15px;background:rgb(152, 152, 197)"></div>
<div style="left:206px;top:35px;width:15px;height:15px;background:rgb(170, 170, 223)"></div>
<div style="left:221px;top:35px;width:15px;height:15px;background:rgb(168, 168, 220)"></div>
<div style="left:236px;top:35px;width:15px;height:15px;background:rgb(165, 165, 216)"></div>
<div style="left:251px;top:35px;width:15px;height:15px;background:rgb(168, 168, 220)"></div>
<div style="left:266px;top:35px;width:15px;height:15px;background:rgb(165, 165, 216)"></div>
<div style="left:281px;top:35px;width:15px;height:15px;background:rgb(160, 160, 209)"></div>
<div style="left:296px;top:35px;width:15px;height:15px;background:rgb(178, 178, 234)"></div>
<div style="left:311px;top:35px;width:15px;height:15px;background:rgb(192, 192, 255)"></div>
<div style="left:326px;top:35px;width:15px;height:15px;background:rgb(192, 192, 255)"></div>
<div style="left:341px;top:35px;width:15px;height:15px;background:rgb(192, 192, 255)"></div>
<div style="left:116px;top:50px;width:15px;height:15px;background:rgb(165, 165, 216)"></div>
<div style="left:131px;top:50px;width:15px;height:15px;background:rgb(165, 165, 216)"></div>
<div style="left:146px;top:50px;width:15px;height:15px;background:rgb(180, 180, 237)"></div>
<div style="left:161px;top:50px;width:15px;height:15px;background:rgb(192, 192, 255)"></div>
<div style="left:176px;top:50px;width:15px;height:15px;background:rgb(182, 182, 239)"></div>
<div style="left:191px;top:50px;width:15px;height:15px;background:rgb(152, 152, 197)"></div>
<div style="left:206px;top:50px;width:15px;height:15px;background:rgb(165, 165, 216)"></div>
<div style="left:221px;top:50px;width:15px;height:15px;background:rgb(168, 168, 220)"></div>
<div style="left:236px;top:50px;width:15px;height:15px;background:rgb(155, 155, 202)"></div>
<div style="left:251px;top:50px;width:15px;height:15px;background:rgb(168, 168, 220)"></div>
<div style="left:266px;top:50px;width:15px;height:15px;background:rgb(155, 155, 202)"></div>
<div style="left:281px;top:50px;width:15px;height:15px;background:rgb(155, 155, 202)"></div>
<div style="left:296px;top:50px;width:15px;height:15px;background:rgb(172, 172, 225)"></div>
<div style="left:311px;top:50px;width:15px;height:15px;background:rgb(192, 192, 255)"></div>
<div style="left:326px;top:50px;width:15px;height:15px;background:rgb(192, 192, 255)"></div>
<div style="left:341px;top:50px;width:15px;height:15px;background:rgb(192, 192, 255)"></div>
<div style="left:116px;top:65px;width:15px;height:15px;background:rgb(168, 168, 220)"></div>
<div style="left:131px;top:65px;width:15px;height:15px;background:rgb(162, 162, 211)"></div>
<div style="left:146px;top:65px;width:15px;height:15px;background:rgb(182, 182, 239)"></div>
<div style="left:161px;top:65px;width:15px;height:15px;background:rgb(192, 192, 255)"></div>
<div style="left:176px;top:65px;width:15px;height:15px;background:rgb(182, 182, 239)"></div>
<div style="left:191px;top:65px;width:15px;height:15px;background:rgb(160, 160, 209)"></div>
<div style="left:206px;top:65px;width:15px;height:15px;background:rgb(175, 175, 230)"></div>
<div style="left:221px;top:65px;width:15px;height:15px;background:rgb(170, 170, 223)"></div>
<div style="left:236px;top:65px;width:15px;height:15px;background:rgb(178, 178, 234)"></div>
<div style="left:251px;top:65px;width:15px;height:15px;background:rgb(172, 172, 225)"></div>
<div style="left:266px;top:65px;width:15px;height:15px;background:rgb(165, 165, 216)"></div>
<div style="left:281px;top:65px;width:15px;height:15px;background:rgb(168, 168, 220)"></div>
<div style="left:296px;top:65px;width:15px;height:15px;background:rgb(182, 182, 239)"></div>
<div style="left:311px;top:65px;width:15px;height:15px;background:rgb(192, 192, 255)"></div>
<div style="left:326px;top:65px;width:15px;height:15px;background:rgb(192, 192, 255)"></div>
<div style="left:341px;top:65px;width:15px;height:15px;background:rgb(192, 192, 255)"></div>
<div style="left:116px;top:80px;width:15px;height:15px;background:rgb(168, 168, 220)"></div>
<div style="left:131px;top:80px;width:15px;height:15px;background:rgb(168, 168, 220)"></div>
<div style="left:146px;top:80px;width:15px;height:15px;background:rgb(180, 180, 237)"></div>
<div style="left:161px;top:80px;width:15px;height:15px;background:rgb(192, 192, 253)"></div>
<div style="left:176px;top:80px;width:15px;height:15px;background:rgb(188, 188, 248)"></div>
<div style="left:191px;top:80px;width:15px;height:15px;background:rgb(160, 160, 209)"></div>
<div style="left:206px;top:80px;width:15px;height:15px;background:rgb(172, 172, 225)"></div>
<div style="left:221px;top:80px;width:15px;height:15px;background:rgb(168, 168, 220)"></div>
<div style="left:236px;top:80px;width:15px;height:15px;background:rgb(165, 165, 216)"></div>
<div style="left:251px;top:80px;width:15px;height:15px;background:rgb(162, 162, 211)"></div>
<div style="left:266px;top:80px;width:15px;height:15px;background:rgb(165, 165, 216)"></div>
<div style="left:281px;top:80px;width:15px;height:15px;background:rgb(175, 175, 230)"></div>
<div style="left:296px;top:80px;width:15px;height:15px;background:rgb(165, 165, 216)"></div>
<div style="left:311px;top:80px;width:15px;height:15px;background:rgb(182, 182, 239)"></div>
<div style="left:326px;top:80px;width:15px;height:15px;background:rgb(192, 192, 255)"></div>
<div style="left:341px;top:80px;width:15px;height:15px;background:rgb(192, 192, 255)"></div>
<div style="left:116px;top:95px;width:15px;height:15px;background:rgb(175, 175, 202)"></div>
<div style="left:131px;top:95px;width:15px;height:15px;background:rgb(170, 170, 197)"></div>
<div style="left:146px;top:95px;width:15px;height:15px;background:rgb(195, 195, 222)"></div>
<div style="left:161px;top:95px;width:15px;height:15px;background:rgb(200, 200, 227)"></div>
<div style="left:176px;top:95px;width:15px;height:15px;background:rgb(195, 195, 222)"></div>
<div style="left:191px;top:95px;width:15px;height:15px;background:rgb(165, 165, 192)"></div>
<div style="left:206px;top:95px;width:15px;height:15px;background:rgb(178, 178, 205)"></div>
<div style="left:221px;top:95px;width:15px;height:15px;background:rgb(178, 178, 205)"></div>
<div style="left:236px;top:95px;width:15px;height:15px;background:rgb(172, 172, 199)"></div>
<div style="left:251px;top:95px;width:15px;height:15px;background:rgb(172, 172, 199)"></div>
<div style="left:266px;top:95px;width:15px;height:15px;background:rgb(172, 172, 199)"></div>
<div style="left:281px;top:95px;width:15px;height:15px;background:rgb(180, 180, 207)"></div>
<div style="left:296px;top:95px;width:15px;height:15px;background:rgb(168, 168, 195)"></div>
<div style="left:311px;top:95px;width:15px;height:15px;background:rgb(192, 192, 219)"></div>
<div style="left:326px;top:95px;width:15px;height:15px;background:rgb(198, 198, 225)"></div>
<div style="left:341px;top:95px;width:15px;height:15px;background:rgb(200, 200, 227)"></div>
<div style="left:116px;top:110px;width:15px;height:15px;background:rgb(185, 185, 199)"></div>
<div style="left:131px;top:110px;width:15px;height:15px;background:rgb(175, 175, 189)"></div>
<div style="left:146px;top:110px;width:15px;height:15px;background:rgb(195, 195, 209)"></div>
<div style="left:161px;top:110px;width:15px;height:15px;background:rgb(210, 210, 224)"></div>
<div style="left:176px;top:110px;width:15px;height:15px;background:rgb(198, 198, 212)"></div>
<div style="left:191px;top:110px;width:15px;height:15px;background:rgb(175, 175, 189)"></div>
<div style="left:206px;top:110px;width:15px;height:15px;background:rgb(185, 185, 199)"></div>
<div style="left:221px;top:110px;width:15px;height:15px;background:rgb(190, 190, 204)"></div>
<div style="left:236px;top:110px;width:15px;height:15px;background:rgb(182, 182, 196)"></div>
<div style="left:251px;top:110px;width:15px;height:15px;background:rgb(180, 180, 194)"></div>
<div style="left:266px;top:110px;width:15px;height:15px;background:rgb(178, 178, 192)"></div>
<div style="left:281px;top:110px;width:15px;height:15px;background:rgb(185, 185, 199)"></div>
<div style="left:296px;top:110px;width:15px;height:15px;background:rgb(178, 178, 192)"></div>
<div style="left:311px;top:110px;width:15px;height:15px;background:rgb(182, 182, 196)"></div>
<div style="left:326px;top:110px;width:15px;height:15px;background:rgb(168, 168, 182)"></div>
<div style="left:341px;top:110px;width:15px;height:15px;background:rgb(205, 205, 219)"></div>
<div style="left:116px;top:125px;width:15px;height:15px;background:rgb(165, 165, 216)"></div>
<div style="left:131px;top:125px;width:15px;height:15px;background:rgb(155, 155, 202)"></div>
<div style="left:146px;top:125px;width:15px;height:15px;background:rgb(182, 182, 239)"></div>
<div style="left:161px;top:125px;width:15px;height:15px;background:rgb(192, 192, 255)"></div>
<div style="left:176px;top:125px;width:15px;height:15px;background:rgb(182, 182, 239)"></div>
<div style="left:191px;top:125px;width:15px;height:15px;background:rgb(155, 155, 202)"></div>
<div style="left:206px;top:125px;width:15px;height:15px;background:rgb(165, 165, 216)"></div>
<div style="left:221px;top:125px;width:15px;height:15px;background:rgb(170, 170, 223)"></div>
<div style="left:236px;top:125px;width:15px;height:15px;background:rgb(160, 160, 209)"></div>
<div style="left:251px;top:125px;width:15px;height:15px;background:rgb(160, 160, 209)"></div>
<div style="left:266px;top:125px;width:15px;height:15px;background:rgb(170, 170, 223)"></div>
<div style="left:281px;top:125px;width:15px;height:15px;background:rgb(165, 165, 216)"></div>
<div style="left:296px;top:125px;width:15px;height:15px;background:rgb(155, 155, 202)"></div>
<div style="left:311px;top:125px;width:15px;height:15px;background:rgb(192, 192, 255)"></div>
<div style="left:326px;top:125px;width:15px;height:15px;background:rgb(192, 192, 255)"></div>
<div style="left:341px;top:125px;width:15px;height:15px;background:rgb(192, 192, 255)"></div>
<div style="left:116px;top:140px;width:15px;height:15px;background:rgb(165, 165, 216)"></div>
<div style="left:131px;top:140px;width:15px;height:15px;background:rgb(178, 178, 234)"></div>
<div style="left:146px;top:140px;width:15px;height:15px;background:rgb(180, 180, 237)"></div>
<div style="left:161px;top:140px;width:15px;height:15px;background:rgb(192, 192, 255)"></div>
<div style="left:176px;top:140px;width:15px;height:15px;background:rgb(182, 182, 239)"></div>
<div style="left:191px;top:140px;width:15px;height:15px;background:rgb(155, 155, 202)"></div>
<div style="left:206px;top:140px;width:15px;height:15px;background:rgb(165, 165, 216)"></div>
<div style="left:221px;top:140px;width:15px;height:15px;background:rgb(170, 170, 223)"></div>
<div style="left:236px;top:140px;width:15px;height:15px;background:rgb(160, 160, 209)"></div>
<div style="left:251px;top:140px;width:15px;height:15px;background:rgb(160, 160, 209)"></div>
<div style="left:266px;top:140px;width:15px;height:15px;background:rgb(170, 170, 223)"></div>
<div style="left:281px;top:140px;width:15px;height:15px;background:rgb(165, 165, 216)"></div>
<div style="left:296px;top:140px;width:15px;height:15px;background:rgb(155, 155, 202)"></div>
<div style="left:311px;top:140px;width:15px;height:15px;background:rgb(175, 175, 230)"></div>
<div style="left:326px;top:140px;width:15px;height:15px;background:rgb(158, 158, 206)"></div>
<div style="left:341px;top:140px;width:15px;height:15px;background:rgb(175, 175, 230)"></div>
<div style="left:116px;top:155px;width:15px;height:15px;background:rgb(160, 160, 209)"></div>
<div style="left:131px;top:155px;width:15px;height:15px;background:rgb(155, 155, 202)"></div>
<div style="left:146px;top:155px;width:15px;height:15px;background:rgb(178, 178, 234)"></div>
<div style="left:161px;top:155px;width:15px;height:15px;background:rgb(192, 192, 253)"></div>
<div style="left:176px;top:155px;width:15px;height:15px;background:rgb(180, 180, 237)"></div>
<div style="left:191px;top:155px;width:15px;height:15px;background:rgb(150, 150, 195)"></div>
<div style="left:206px;top:155px;width:15px;height:15px;background:rgb(162, 162, 211)"></div>
<div style="left:221px;top:155px;width:15px;height:15px;background:rgb(168, 168, 220)"></div>
<div style="left:236px;top:155px;width:15px;height:15px;background:rgb(155, 155, 202)"></div>
<div style="left:251px;top:155px;width:15px;height:15px;background:rgb(155, 155, 202)"></div>
<div style="left:266px;top:155px;width:15px;height:15px;background:rgb(168, 168, 220)"></div>
<div style="left:281px;top:155px;width:15px;height:15px;background:rgb(158, 158, 206)"></div>
<div style="left:296px;top:155px;width:15px;height:15px;background:rgb(158, 158, 206)"></div>
<div style="left:311px;top:155px;width:15px;height:15px;background:rgb(192, 192, 253)"></div>
<div style="left:326px;top:155px;width:15px;height:15px;background:rgb(192, 192, 253)"></div>
<div style="left:341px;top:155px;width:15px;height:15px;background:rgb(192, 192, 253)"></div>
<div style="left:116px;top:170px;width:15px;height:15px;background:rgb(160, 160, 209)"></div>
<div style="left:131px;top:170px;width:15px;height:15px;background:rgb(158, 158, 206)"></div>
<div style="left:146px;top:170px;width:15px;height:15px;background:rgb(178, 178, 234)"></div>
<div style="left:161px;top:170px;width:15px;height:15px;background:rgb(192, 192, 255)"></div>
<div style="left:176px;top:170px;width:15px;height:15px;background:rgb(182, 182, 239)"></div>
<div style="left:191px;top:170px;width:15px;height:15px;background:rgb(155, 155, 202)"></div>
<div style="left:206px;top:170px;width:15px;height:15px;background:rgb(165, 165, 216)"></div>
<div style="left:221px;top:170px;width:15px;height:15px;background:rgb(170, 170, 223)"></div>
<div style="left:236px;top:170px;width:15px;height:15px;background:rgb(158, 158, 206)"></div>
<div style="left:251px;top:170px;width:15px;height:15px;background:rgb(158, 158, 206)"></div>
<div style="left:266px;top:170px;width:15px;height:15px;background:rgb(165, 165, 216)"></div>
<div style="left:281px;top:170px;width:15px;height:15px;background:rgb(175, 175, 230)"></div>
<div style="left:296px;top:170px;width:15px;height:15px;background:rgb(192, 192, 255)"></div>
<div style="left:311px;top:170px;width:15px;height:15px;background:rgb(192, 192, 255)"></div>
<div style="left:326px;top:170px;width:15px;height:15px;background:rgb(192, 192, 255)"></div>
<div style="left:341px;top:170px;width:15px;height:15px;background:rgb(192, 192, 255)"></div>
<div style="left:116px;top:185px;width:15px;height:15px;background:rgb(162, 162, 211)"></div>
<div style="left:131px;top:185px;width:15px;height:15px;background:rgb(162, 162, 211)"></div>
<div style="left:146px;top:185px;width:15px;height:15px;background:rgb(180, 180, 237)"></div>
<div style="left:161px;top:185px;width:15px;height:15px;background:rgb(192, 192, 255)"></div>
<div style="left:176px;top:185px;width:15px;height:15px;background:rgb(182, 182, 239)"></div>
<div style="left:191px;top:185px;width:15px;height:15px;background:rgb(160, 160, 209)"></div>
<div style="left:206px;top:185px;width:15px;height:15px;background:rgb(165, 165, 216)"></div>
<div style="left:221px;top:185px;width:15px;height:15px;background:rgb(172, 172, 225)"></div>
<div style="left:236px;top:185px;width:15px;height:15px;background:rgb(162, 162, 211)"></div>
<div style="left:251px;top:185px;width:15px;height:15px;background:rgb(168, 168, 220)"></div>
<div style="left:266px;top:185px;width:15px;height:15px;background:rgb(160, 160, 209)"></div>
<div style="left:281px;top:185px;width:15px;height:15px;background:rgb(172, 172, 225)"></div>
<div style="left:296px;top:185px;width:15px;height:15px;background:rgb(182, 182, 239)"></div>
<div style="left:311px;top:185px;width:15px;height:15px;background:rgb(192, 192, 255)"></div>
<div style="left:326px;top:185px;width:15px;height:15px;background:rgb(192, 192, 255)"></div>
<div style="left:341px;top:185px;width:15px;height:15px;background:rgb(192, 192, 255)"></div>
<div style="left:116px;top:200px;width:15px;height:15px;background:rgb(165, 165, 216)"></div>
<div style="left:131px;top:200px;width:15px;height:15px;background:rgb(165, 165, 216)"></div>
<div style="left:146px;top:200px;width:15px;height:15px;background:rgb(182, 182, 239)"></div>
<div style="left:161px;top:200px;width:15px;height:15px;background:rgb(192, 192, 255)"></div>
<div style="left:176px;top:200px;width:15px;height:15px;background:rgb(188, 188, 248)"></div>
<div style="left:191px;top:200px;width:15px;height:15px;background:rgb(162, 162, 211)"></div>
<div style="left:206px;top:200px;width:15px;height:15px;background:rgb(165, 165, 216)"></div>
<div style="left:221px;top:200px;width:15px;height:15px;background:rgb(172, 172, 225)"></div>
<div style="left:236px;top:200px;width:15px;height:15px;background:rgb(170, 170, 223)"></div>
<div style="left:251px;top:200px;width:15px;height:15px;background:rgb(160, 160, 209)"></div>
<div style="left:266px;top:200px;width:15px;height:15px;background:rgb(185, 185, 244)"></div>
<div style="left:281px;top:200px;width:15px;height:15px;background:rgb(185, 185, 244)"></div>
<div style="left:296px;top:200px;width:15px;height:15px;background:rgb(188, 188, 248)"></div>
<div style="left:311px;top:200px;width:15px;height:15px;background:rgb(192, 192, 255)"></div>
<div style="left:326px;top:200px;width:15px;height:15px;background:rgb(192, 192, 255)"></div>
<div style="left:341px;top:200px;width:15px;height:15px;background:rgb(192, 192, 255)"></div>
<div style="left:116px;top:215px;width:15px;height:15px;background:rgb(162, 162, 211)"></div>
<div style="left:131px;top:215px;width:15px;height:15px;background:rgb(165, 165, 216)"></div>
<div style="left:146px;top:215px;width:15px;height:15px;background:rgb(180, 180, 237)"></div>
<div style="left:161px;top:215px;width:15px;height:15px;background:rgb(192, 192, 255)"></div>
<div style="left:176px;top:215px;width:15px;height:15px;background:rgb(185, 185, 244)"></div>
<div style="left:191px;top:215px;width:15px;height:15px;background:rgb(160, 160, 209)"></div>
<div style="left:206px;top:215px;width:15px;height:15px;background:rgb(168, 168, 220)"></div>
<div style="left:221px;top:215px;width:15px;height:15px;background:rgb(165, 165, 216)"></div>
<div style="left:236px;top:215px;width:15px;height:15px;background:rgb(168, 168, 220)"></div>
<div style="left:251px;top:215px;width:15px;height:15px;background:rgb(172, 172, 225)"></div>
<div style="left:266px;top:215px;width:15px;height:15px;background:rgb(175, 175, 230)"></div>
<div style="left:281px;top:215px;width:15px;height:15px;background:rgb(192, 192, 255)"></div>
<div style="left:296px;top:215px;width:15px;height:15px;background:rgb(192, 192, 255)"></div>
<div style="left:311px;top:215px;width:15px;height:15px;background:rgb(192, 192, 255)"></div>
<div style="left:326px;top:215px;width:15px;height:15px;background:rgb(192, 192, 255)"></div>
<div style="left:341px;top:215px;width:15px;height:15px;background:rgb(192, 192, 255)"></div>
<div style="left:116px;top:230px;width:15px;height:15px;background:rgb(168, 168, 220)"></div>
<div style="left:131px;top:230px;width:15px;height:15px;background:rgb(170, 170, 223)"></div>
<div style="left:146px;top:230px;width:15px;height:15px;background:rgb(182, 182, 239)"></div>
<div style="left:161px;top:230px;width:15px;height:15px;background:rgb(192, 192, 255)"></div>
<div style="left:176px;top:230px;width:15px;height:15px;background:rgb(185, 185, 244)"></div>
<div style="left:191px;top:230px;width:15px;height:15px;background:rgb(165, 165, 216)"></div>
<div style="left:206px;top:230px;width:15px;height:15px;background:rgb(170, 170, 223)"></div>
<div style="left:221px;top:230px;width:15px;height:15px;background:rgb(165, 165, 216)"></div>
<div style="left:236px;top:230px;width:15px;height:15px;background:rgb(172, 172, 225)"></div>
<div style="left:251px;top:230px;width:15px;height:15px;background:rgb(165, 165, 216)"></div>
<div style="left:266px;top:230px;width:15px;height:15px;background:rgb(170, 170, 223)"></div>
<div style="left:281px;top:230px;width:15px;height:15px;background:rgb(188, 188, 248)"></div>
<div style="left:296px;top:230px;width:15px;height:15px;background:rgb(188, 188, 248)"></div>
<div style="left:311px;top:230px;width:15px;height:15px;background:rgb(188, 188, 248)"></div>
<div style="left:326px;top:230px;width:15px;height:15px;background:rgb(192, 192, 255)"></div>
<div style="left:341px;top:230px;width:15px;height:15px;background:rgb(192, 192, 255)"></div>
<div style="left:116px;top:245px;width:15px;height:15px;background:rgb(165, 165, 216)"></div>
<div style="left:131px;top:245px;width:15px;height:15px;background:rgb(165, 165, 216)"></div>
<div style="left:146px;top:245px;width:15px;height:15px;background:rgb(182, 182, 239)"></div>
<div style="left:161px;top:245px;width:15px;height:15px;background:rgb(192, 192, 255)"></div>
<div style="left:176px;top:245px;width:15px;height:15px;background:rgb(182, 182, 239)"></div>
<div style="left:191px;top:245px;width:15px;height:15px;background:rgb(162, 162, 211)"></div>
<div style="left:206px;top:245px;width:15px;height:15px;background:rgb(165, 165, 216)"></div>
<div style="left:221px;top:245px;width:15px;height:15px;background:rgb(165, 165, 216)"></div>
<div style="left:236px;top:245px;width:15px;height:15px;background:rgb(165, 165, 216)"></div>
<div style="left:251px;top:245px;width:15px;height:15px;background:rgb(162, 162, 211)"></div>
<div style="left:266px;top:245px;width:15px;height:15px;background:rgb(172, 172, 225)"></div>
<div style="left:281px;top:245px;width:15px;height:15px;background:rgb(165, 165, 216)"></div>
<div style="left:296px;top:245px;width:15px;height:15px;background:rgb(165, 165, 216)"></div>
<div style="left:311px;top:245px;width:15px;height:15px;background:rgb(165, 165, 216)"></div>
<div style="left:326px;top:245px;width:15px;height:15px;background:rgb(188, 188, 248)"></div>
<div style="left:341px;top:245px;width:15px;height:15px;background:rgb(192, 192, 255)"></div>
<div style="left:116px;top:260px;width:15px;height:15px;background:rgb(162, 162, 211)"></div>
<div style="left:131px;top:260px;width:15px;height:15px;background:rgb(168, 168, 220)"></div>
<div style="left:146px;top:260px;width:15px;height:15px;background:rgb(182, 182, 239)"></div>
<div style="left:161px;top:260px;width:15px;height:15px;background:rgb(192, 192, 255)"></div>
<div style="left:176px;top:260px;width:15px;height:15px;background:rgb(182, 182, 239)"></div>
<div style="left:191px;top:260px;width:15px;height:15px;background:rgb(158, 158, 206)"></div>
<div style="left:206px;top:260px;width:15px;height:15px;background:rgb(160, 160, 209)"></div>
<div style="left:221px;top:260px;width:15px;height:15px;background:rgb(162, 162, 211)"></div>
<div style="left:236px;top:260px;width:15px;height:15px;background:rgb(162, 162, 211)"></div>
<div style="left:251px;top:260px;width:15px;height:15px;background:rgb(152, 152, 197)"></div>
<div style="left:266px;top:260px;width:15px;height:15px;background:rgb(162, 162, 211)"></div>
<div style="left:281px;top:260px;width:15px;height:15px;background:rgb(170, 170, 223)"></div>
<div style="left:296px;top:260px;width:15px;height:15px;background:rgb(158, 158, 206)"></div>
<div style="left:311px;top:260px;width:15px;height:15px;background:rgb(160, 160, 209)"></div>
<div style="left:326px;top:260px;width:15px;height:15px;background:rgb(160, 160, 209)"></div>
<div style="left:341px;top:260px;width:15px;height:15px;background:rgb(180, 180, 237)"></div>
<div style="left:116px;top:275px;width:15px;height:15px;background:rgb(158, 158, 206)"></div>
<div style="left:131px;top:275px;width:15px;height:15px;background:rgb(155, 155, 202)"></div>
<div style="left:146px;top:275px;width:15px;height:15px;background:rgb(180, 180, 237)"></div>
<div style="left:161px;top:275px;width:15px;height:15px;background:rgb(192, 192, 253)"></div>
<div style="left:176px;top:275px;width:15px;height:15px;background:rgb(180, 180, 237)"></div>
<div style="left:191px;top:275px;width:15px;height:15px;background:rgb(155, 155, 202)"></div>
<div style="left:206px;top:275px;width:15px;height:15px;background:rgb(155, 155, 202)"></div>
<div style="left:221px;top:275px;width:15px;height:15px;background:rgb(160, 160, 209)"></div>
<div style="left:236px;top:275px;width:15px;height:15px;background:rgb(158, 158, 206)"></div>
<div style="left:251px;top:275px;width:15px;height:15px;background:rgb(152, 152, 197)"></div>
<div style="left:266px;top:275px;width:15px;height:15px;background:rgb(158, 158, 206)"></div>
<div style="left:281px;top:275px;width:15px;height:15px;background:rgb(160, 160, 209)"></div>
<div style="left:296px;top:275px;width:15px;height:15px;background:rgb(158, 158, 206)"></div>
<div style="left:311px;top:275px;width:15px;height:15px;background:rgb(158, 158, 206)"></div>
<div style="left:326px;top:275px;width:15px;height:15px;background:rgb(178, 178, 234)"></div>
<div style="left:341px;top:275px;width:15px;height:15px;background:rgb(192, 192, 253)"></div>
<div style="left:116px;top:290px;width:15px;height:15px;background:rgb(162, 162, 211)"></div>
<div style="left:131px;top:290px;width:15px;height:15px;background:rgb(165, 165, 216)"></div>
<div style="left:146px;top:290px;width:15px;height:15px;background:rgb(180, 180, 237)"></div>
<div style="left:161px;top:290px;width:15px;height:15px;background:rgb(192, 192, 255)"></div>
<div style="left:176px;top:290px;width:15px;height:15px;background:rgb(182, 182, 239)"></div>
<div style="left:191px;top:290px;width:15px;height:15px;background:rgb(158, 158, 206)"></div>
<div style="left:206px;top:290px;width:15px;height:15px;background:rgb(160, 160, 209)"></div>
<div style="left:221px;top:290px;width:15px;height:15px;background:rgb(162, 162, 211)"></div>
<div style="left:236px;top:290px;width:15px;height:15px;background:rgb(162, 162, 211)"></div>
<div style="left:251px;top:290px;width:15px;height:15px;background:rgb(155, 155, 202)"></div>
<div style="left:266px;top:290px;width:15px;height:15px;background:rgb(165, 165, 216)"></div>
<div style="left:281px;top:290px;width:15px;height:15px;background:rgb(162, 162, 211)"></div>
<div style="left:296px;top:290px;width:15px;height:15px;background:rgb(162, 162, 211)"></div>
<div style="left:311px;top:290px;width:15px;height:15px;background:rgb(168, 168, 220)"></div>
<div style="left:326px;top:290px;width:15px;height:15px;background:rgb(158, 158, 206)"></div>
<div style="left:341px;top:290px;width:15px;height:15px;background:rgb(178, 178, 234)"></div>
<div style="left:116px;top:305px;width:15px;height:15px;background:rgb(162, 162, 211)"></div>
<div style="left:131px;top:305px;width:15px;height:15px;background:rgb(162, 162, 211)"></div>
<div style="left:146px;top:305px;width:15px;height:15px;background:rgb(182, 182, 239)"></div>
<div style="left:161px;top:305px;width:15px;height:15px;background:rgb(192, 192, 255)"></div>
<div style="left:176px;top:305px;width:15px;height:15px;background:rgb(182, 182, 239)"></div>
<div style="left:191px;top:305px;width:15px;height:15px;background:rgb(158, 158, 206)"></div>
<div style="left:206px;top:305px;width:15px;height:15px;background:rgb(160, 160, 209)"></div>
<div style="left:221px;top:305px;width:15px;height:15px;background:rgb(155, 155, 202)"></div>
<div style="left:236px;top:305px;width:15px;height:15px;background:rgb(162, 162, 211)"></div>
<div style="left:251px;top:305px;width:15px;height:15px;background:rgb(155, 155, 202)"></div>
<div style="left:266px;top:305px;width:15px;height:15px;background:rgb(165, 165, 216)"></div>
<div style="left:281px;top:305px;width:15px;height:15px;background:rgb(158, 158, 206)"></div>
<div style="left:296px;top:305px;width:15px;height:15px;background:rgb(165, 165, 216)"></div>
<div style="left:311px;top:305px;width:15px;height:15px;background:rgb(162, 162, 211)"></div>
<div style="left:326px;top:305px;width:15px;height:15px;background:rgb(180, 180, 237)"></div>
<div style="left:341px;top:305px;width:15px;height:15px;background:rgb(192, 192, 255)"></div>
<div style="left:116px;top:320px;width:15px;height:15px;background:rgb(165, 165, 216)"></div>
<div style="left:131px;top:320px;width:15px;height:15px;background:rgb(165, 165, 216)"></div>
<div style="left:146px;top:320px;width:15px;height:15px;background:rgb(182, 182, 239)"></div>
<div style="left:161px;top:320px;width:15px;height:15px;background:rgb(192, 192, 255)"></div>
<div style="left:176px;top:320px;width:15px;height:15px;background:rgb(182, 182, 239)"></div>
<div style="left:191px;top:320px;width:15px;height:15px;background:rgb(165, 165, 216)"></div>
<div style="left:206px;top:320px;width:15px;height:15px;background:rgb(165, 165, 216)"></div>
<div style="left:221px;top:320px;width:15px;height:15px;background:rgb(168, 168, 220)"></div>
<div style="left:236px;top:320px;width:15px;height:15px;background:rgb(165, 165, 216)"></div>
<div style="left:251px;top:320px;width:15px;height:15px;background:rgb(162, 162, 211)"></div>
<div style="left:266px;top:320px;width:15px;height:15px;background:rgb(175, 175, 230)"></div>
<div style="left:281px;top:320px;width:15px;height:15px;background:rgb(172, 172, 225)"></div>
<div style="left:296px;top:320px;width:15px;height:15px;background:rgb(175, 175, 230)"></div>
<div style="left:311px;top:320px;width:15px;height:15px;background:rgb(168, 168, 220)"></div>
<div style="left:326px;top:320px;width:15px;height:15px;background:rgb(170, 170, 223)"></div>
<div style="left:341px;top:320px;width:15px;height:15px;background:rgb(192, 192, 255)"></div>
<div style="left:116px;top:335px;width:15px;height:15px;background:rgb(162, 162, 211)"></div>
<div style="left:131px;top:335px;width:15px;height:15px;background:rgb(165, 165, 216)"></div>
<div style="left:146px;top:335px;width:15px;height:15px;background:rgb(182, 182, 239)"></div>
<div style="left:161px;top:335px;width:15px;height:15px;background:rgb(192, 192, 255)"></div>
<div style="left:176px;top:335px;width:15px;height:15px;background:rgb(185, 185, 244)"></div>
<div style="left:191px;top:335px;width:15px;height:15px;background:rgb(165, 165, 216)"></div>
<div style="left:206px;top:335px;width:15px;height:15px;background:rgb(165, 165, 216)"></div>
<div style="left:221px;top:335px;width:15px;height:15px;background:rgb(165, 165, 216)"></div>
<div style="left:236px;top:335px;width:15px;height:15px;background:rgb(168, 168, 220)"></div>
<div style="left:251px;top:335px;width:15px;height:15px;background:rgb(170, 170, 223)"></div>
<div style="left:266px;top:335px;width:15px;height:15px;background:rgb(172, 172, 225)"></div>
<div style="left:281px;top:335px;width:15px;height:15px;background:rgb(180, 180, 237)"></div>
<div style="left:296px;top:335px;width:15px;height:15px;background:rgb(185, 185, 244)"></div>
<div style="left:311px;top:335px;width:15px;height:15px;background:rgb(185, 185, 244)"></div>
<div style="left:326px;top:335px;width:15px;height:15px;background:rgb(182, 182, 239)"></div>
<div style="left:341px;top:335px;width:15px;height:15px;background:rgb(192, 192, 255)"></div>
<div style="left:116px;top:350px;width:15px;height:15px;background:rgb(165, 165, 216)"></div>
<div style="left:131px;top:350px;width:15px;height:15px;background:rgb(165, 165, 216)"></div>
<div style="left:146px;top:350px;width:15px;height:15px;background:rgb(182, 182, 239)"></div>
<div style="left:161px;top:350px;width:15px;height:15px;background:rgb(192, 192, 255)"></div>
<div style="left:176px;top:350px;width:15px;height:15px;background:rgb(185, 185, 244)"></div>
<div style="left:191px;top:350px;width:15px;height:15px;background:rgb(165, 165, 216)"></div>
<div style="left:206px;top:350px;width:15px;height:15px;background:rgb(172, 172, 225)"></div>
<div style="left:221px;top:350px;width:15px;height:15px;background:rgb(168, 168, 220)"></div>
<div style="left:236px;top:350px;width:15px;height:15px;background:rgb(165, 165, 216)"></div>
<div style="left:251px;top:350px;width:15px;height:15px;background:rgb(165, 165, 216)"></div>
<div style="left:266px;top:350px;width:15px;height:15px;background:rgb(165, 165, 216)"></div>
<div style="left:281px;top:350px;width:15px;height:15px;background:rgb(180, 180, 237)"></div>
<div style="left:296px;top:350px;width:15px;height:15px;background:rgb(192, 192, 255)"></div>
<div style="left:311px;top:350px;width:15px;height:15px;background:rgb(192, 192, 255)"></div>
<div style="left:326px;top:350px;width:15px;height:15px;background:rgb(192, 192, 255)"></div>
<div style="left:341px;top:350px;width:15px;height:15px;background:rgb(192, 192, 255)"></div>
<div style="left:116px;top:365px;width:15px;height:15px;background:rgb(165, 165, 216)"></div>
<div style="left:131px;top:365px;width:15px;height:15px;background:rgb(165, 165, 216)"></div>
<div style="left:146px;top:365px;width:15px;height:15px;background:rgb(180, 180, 237)"></div>
<div style="left:161px;top:365px;width:15px;height:15px;background:rgb(192, 192, 255)"></div>
<div style="left:176px;top:365px;width:15px;height:15px;background:rgb(185, 185, 244)"></div>
<div style="left:191px;top:365px;width:15px;height:15px;background:rgb(165, 165, 216)"></div>
<div style="left:206px;top:365px;width:15px;height:15px;background:rgb(170, 170, 223)"></div>
<div style="left:221px;top:365px;width:15px;height:15px;background:rgb(172, 172, 225)"></div>
<div style="left:236px;top:365px;width:15px;height:15px;background:rgb(168, 168, 220)"></div>
<div style="left:251px;top:365px;width:15px;height:15px;background:rgb(165, 165, 216)"></div>
<div style="left:266px;top:365px;width:15px;height:15px;background:rgb(178, 178, 234)"></div>
<div style="left:281px;top:365px;width:15px;height:15px;background:rgb(192, 192, 255)"></div>
<div style="left:296px;top:365px;width:15px;height:15px;background:rgb(192, 192, 255)"></div>
<div style="left:311px;top:365px;width:15px;height:15px;background:rgb(192, 192, 255)"></div>
<div style="left:326px;top:365px;width:15px;height:15px;background:rgb(192, 192, 255)"></div>
<div style="left:341px;top:365px;width:15px;height:15px;background:rgb(192, 192, 255)"></div>
<div style="left:116px;top:380px;width:15px;height:15px;background:rgb(162, 162, 211)"></div>
<div style="left:131px;top:380px;width:15px;height:15px;background:rgb(158, 158, 206)"></div>
<div style="left:146px;top:380px;width:15px;height:15px;background:rgb(180, 180, 237)"></div>
<div style="left:161px;top:380px;width:15px;height:15px;background:rgb(192, 192, 255)"></div>
<div style="left:176px;top:380px;width:15px;height:15px;background:rgb(182, 182, 239)"></div>
<div style="left:191px;top:380px;width:15px;height:15px;background:rgb(162, 162, 211)"></div>
<div style="left:206px;top:380px;width:15px;height:15px;background:rgb(160, 160, 209)"></div>
<div style="left:221px;top:380px;width:15px;height:15px;background:rgb(165, 165, 216)"></div>
<div style="left:236px;top:380px;width:15px;height:15px;background:rgb(165, 165, 216)"></div>
<div style="left:251px;top:380px;width:15px;height:15px;background:rgb(155, 155, 202)"></div>
<div style="left:266px;top:380px;width:15px;height:15px;background:rgb(158, 158, 206)"></div>
<div style="left:281px;top:380px;width:15px;height:15px;background:rgb(162, 162, 211)"></div>
<div style="left:296px;top:380px;width:15px;height:15px;background:rgb(158, 158, 206)"></div>
<div style="left:311px;top:380px;width:15px;height:15px;background:rgb(162, 162, 211)"></div>
<div style="left:326px;top:380px;width:15px;height:15px;background:rgb(192, 192, 255)"></div>
<div style="left:341px;top:380px;width:15px;height:15px;background:rgb(192, 192, 255)"></div>
<div style="left:116px;top:395px;width:15px;height:11px;background:rgb(145, 145, 188)"></div>
<div style="left:131px;top:395px;width:15px;height:11px;background:rgb(140, 140, 181)"></div>
<div style="left:146px;top:395px;width:15px;height:11px;background:rgb(170, 170, 223)"></div>
<div style="left:161px;top:395px;width:15px;height:11px;background:rgb(192, 192, 253)"></div>
<div style="left:176px;top:395px;width:15px;height:11px;background:rgb(175, 175, 230)"></div>
<div style="left:191px;top:395px;width:15px;height:11px;background:rgb(148, 148, 192)"></div>
<div style="left:206px;top:395px;width:15px;height:11px;background:rgb(145, 145, 188)"></div>
<div style="left:221px;top:395px;width:15px;height:11px;background:rgb(138, 138, 178)"></div>
<div style="left:236px;top:395px;width:15px;height:11px;background:rgb(140, 140, 181)"></div>
<div style="left:251px;top:395px;width:15px;height:11px;background:rgb(142, 142, 183)"></div>
<div style="left:266px;top:395px;width:15px;height:11px;background:rgb(152, 152, 197)"></div>
<div style="left:281px;top:395px;width:15px;height:11px;background:rgb(145, 145, 188)"></div>
<div style="left:296px;top:395px;width:15px;height:11px;background:rgb(185, 185, 244)"></div>
<div style="left:311px;top:395px;width:15px;height:11px;background:rgb(192, 192, 255)"></div>
<div style="left:326px;top:395px;width:15px;height:11px;background:rgb(192, 192, 255)"></div>
<div style="left:341px;top:395px;width:15px;height:11px;background:rgb(192, 192, 255)"></div>
</div>
<div style="left:621px;top:287px;width:19px;height:432px;background:#f0f0f0;"></div>
<svg style="position:absolute;left:626px;top:294px" width="8" height="6" viewBox="0 0 8 6"><path d="M0.8 5L4 1.5L7.2 5" fill="none" stroke="#505050" stroke-width="2"/></svg>
<div style="left:622px;top:305px;width:15px;height:17px;background:#cdcdcd;"></div>
<svg style="position:absolute;left:625px;top:707px" width="9" height="5" viewBox="0 0 9 5"><path d="M0.5 0.5L4.5 4.5L8.5 0.5" fill="none" stroke="#505050" stroke-width="2"/></svg>
<div style="left:2px;top:715px;width:619px;height:1px;background:#fff;"></div>
<div style="left:2px;top:716px;width:619px;height:2px;background:#d3d3d3;"></div>
<div style="left:2px;top:718px;width:619px;height:1px;background:#fff;"></div>
<div style="left:63px;top:716px;width:1px;height:2px;background:#fff;"></div>
<div style="left:111px;top:716px;width:1px;height:2px;background:#fff;"></div>
<div style="left:181px;top:716px;width:1px;height:2px;background:#fff;"></div>
<div style="left:368px;top:716px;width:1px;height:2px;background:#fff;"></div>
<div style="left:518px;top:716px;width:1px;height:2px;background:#fff;"></div>
<div style="left:588px;top:716px;width:1px;height:2px;background:#fff;"></div>
<div style="left:2px;top:719px;width:637px;height:16px;background:#f0f0f0;"></div>
<div style="left:20px;top:720px;width:315px;height:14px;background:#cdcdcd;"></div>
<svg style="position:absolute;left:9px;top:722px" width="5" height="9" viewBox="0 0 5 9"><path d="M4.5 0.5L0.5 4.5L4.5 8.5" fill="none" stroke="#505050" stroke-width="2"/></svg>
<svg style="position:absolute;left:610px;top:722px" width="5" height="9" viewBox="0 0 5 9"><path d="M0.5 0.5L4.5 4.5L0.5 8.5" fill="none" stroke="#505050" stroke-width="2"/></svg>
<div style="left:0px;top:737px;width:1366px;height:1px;background:#696969;"></div>
<div style="left:2px;top:736px;width:638px;height:1px;background:#fff;"></div>
<div style="left:639px;top:287px;width:1px;height:450px;background:#fff;"></div>
<div style="left:638px;top:287px;width:1px;height:449px;background:#e8e8e8;"></div>
<div style="left:645px;top:254px;width:719px;height:3px;background:#a0a0a0;"></div>
<div style="left:645px;top:255px;width:1px;height:483px;background:#696969;"></div>
<div style="left:646px;top:255px;width:1px;height:483px;background:#a0a0a0;"></div>
<div style="left:647px;top:257px;width:717px;height:28px;background:#000080;"></div>
<div style="left:652px;top:263px;width:15px;height:14px;background:#fff;"></div>
<div style="left:652px;top:263px;width:13px;height:13px;background:#fff;border-top:2px solid #8a8a80;border-left:2px solid #8a8a80;border-right:1px solid #e0e0e0;border-bottom:1px solid #e0e0e0"></div>
<svg style="position:absolute;left:654px;top:265px" width="9" height="9" viewBox="0 0 9 9"><path d="M1 4.2L3.5 7L8 1.5" fill="none" stroke="#000" stroke-width="2.2"/></svg>
<div class="t" style="left:670px;top:260px;font-size:20.5px;color:#fff">Finques - </div>
<div style="left:763px;top:263px;width:15px;height:14px;background:#fff;"></div>
<div style="left:763px;top:263px;width:13px;height:13px;background:#fff;border-top:2px solid #8a8a80;border-left:2px solid #8a8a80;border-right:1px solid #e0e0e0;border-bottom:1px solid #e0e0e0"></div>
<svg style="position:absolute;left:765px;top:265px" width="9" height="9" viewBox="0 0 9 9"><path d="M1 4.2L3.5 7L8 1.5" fill="none" stroke="#000" stroke-width="2.2"/></svg>
<div class="t" style="left:780px;top:260px;font-size:20.5px;color:#fff">Abastaments</div>
<div style="left:647px;top:285px;width:717px;height:2px;background:#909090;"></div>
<div style="left:647px;top:287px;width:717px;height:159px;background:#ffc080;"></div>
<div style="left:647px;top:287px;width:717px;height:19px;background:#f0f0f0;"></div>
<div style="left:647px;top:287px;width:717px;height:1px;background:#fff;"></div>
<div style="left:648px;top:288px;width:70px;height:16px;background:#f0f0f0;border-top:1px solid #fff;border-left:1px solid #fff;border-right:2px solid #7a7a7a"></div>
<div class="t" style="left:654px;top:292px;">cod_finqu...</div>
<div style="left:718px;top:306px;width:1px;height:140px;background:#f0f0f0;"></div>
<div style="left:718px;top:288px;width:70px;height:16px;background:#f0f0f0;border-top:1px solid #fff;border-left:1px solid #fff;border-right:2px solid #7a7a7a"></div>
<div class="t" style="left:724px;top:292px;">nombre_fi...</div>
<div style="left:788px;top:306px;width:1px;height:140px;background:#f0f0f0;"></div>
<div style="left:788px;top:288px;width:70px;height:16px;background:#f0f0f0;border-top:1px solid #fff;border-left:1px solid #fff;border-right:2px solid #7a7a7a"></div>
<div class="t" style="left:794px;top:292px;">fecha</div>
<div style="left:858px;top:306px;width:1px;height:140px;background:#f0f0f0;"></div>
<div style="left:858px;top:288px;width:70px;height:16px;background:#f0f0f0;border-top:1px solid #fff;border-left:1px solid #fff;border-right:2px solid #7a7a7a"></div>
<div class="t" style="left:864px;top:292px;">id_usuario</div>
<div style="left:928px;top:306px;width:1px;height:140px;background:#f0f0f0;"></div>
<div style="left:928px;top:288px;width:70px;height:16px;background:#f0f0f0;border-top:1px solid #fff;border-left:1px solid #fff;border-right:2px solid #7a7a7a"></div>
<div class="t" style="left:934px;top:292px;">id_regans</div>
<div style="left:998px;top:306px;width:1px;height:140px;background:#f0f0f0;"></div>
<div style="left:998px;top:288px;width:70px;height:16px;background:#f0f0f0;border-top:1px solid #fff;border-left:1px solid #fff;border-right:2px solid #7a7a7a"></div>
<div class="t" style="left:1004px;top:292px;">id_colecti...</div>
<div style="left:1068px;top:306px;width:1px;height:140px;background:#f0f0f0;"></div>
<div style="left:1068px;top:288px;width:70px;height:16px;background:#f0f0f0;border-top:1px solid #fff;border-left:1px solid #fff;border-right:2px solid #7a7a7a"></div>
<div class="t" style="left:1074px;top:292px;">municipi</div>
<div style="left:1138px;top:306px;width:1px;height:140px;background:#f0f0f0;"></div>
<div style="left:1138px;top:288px;width:70px;height:16px;background:#f0f0f0;border-top:1px solid #fff;border-left:1px solid #fff;border-right:2px solid #7a7a7a"></div>
<div class="t" style="left:1144px;top:292px;">id_sindic</div>
<div style="left:1208px;top:306px;width:1px;height:140px;background:#f0f0f0;"></div>
<div style="left:1208px;top:288px;width:70px;height:16px;background:#f0f0f0;border-top:1px solid #fff;border-left:1px solid #fff;border-right:2px solid #7a7a7a"></div>
<div class="t" style="left:1214px;top:292px;">n_finca</div>
<div style="left:1278px;top:306px;width:1px;height:140px;background:#f0f0f0;"></div>
<div style="left:1278px;top:288px;width:70px;height:16px;background:#f0f0f0;border-top:1px solid #fff;border-left:1px solid #fff;border-right:2px solid #7a7a7a"></div>
<div class="t" style="left:1284px;top:292px;">segregació</div>
<div style="left:1348px;top:306px;width:1px;height:140px;background:#f0f0f0;"></div>
<div style="left:1348px;top:288px;width:70px;height:16px;background:#f0f0f0;border-top:1px solid #fff;border-left:1px solid #fff;border-right:2px solid #7a7a7a"></div>
<div class="t" style="left:1354px;top:292px;">su</div>
<div style="left:1418px;top:306px;width:1px;height:140px;background:#f0f0f0;"></div>
<div style="left:647px;top:304px;width:717px;height:2px;background:#7a7a7a;"></div>
<div style="left:647px;top:307px;width:717px;height:1px;background:#f0f0f0;"></div>
<div style="left:647px;top:322px;width:717px;height:1px;background:#f0f0f0;"></div>
<div style="left:647px;top:337px;width:717px;height:1px;background:#f0f0f0;"></div>
<div style="left:647px;top:352px;width:717px;height:1px;background:#f0f0f0;"></div>
<div style="left:647px;top:367px;width:717px;height:1px;background:#f0f0f0;"></div>
<div style="left:647px;top:382px;width:717px;height:1px;background:#f0f0f0;"></div>
<div style="left:647px;top:397px;width:717px;height:1px;background:#f0f0f0;"></div>
<div style="left:647px;top:412px;width:717px;height:1px;background:#f0f0f0;"></div>
<div style="left:647px;top:427px;width:717px;height:1px;background:#f0f0f0;"></div>
<div style="left:647px;top:442px;width:717px;height:1px;background:#f0f0f0;"></div>
<div style="left:1363px;top:287px;width:1px;height:159px;background:#f0f0f0;"></div>
<div style="left:647px;top:446px;width:717px;height:17px;background:#f0f0f0;"></div>
<div style="left:665px;top:448px;width:393px;height:14px;background:#cdcdcd;"></div>
<svg style="position:absolute;left:654px;top:450px" width="5" height="9" viewBox="0 0 5 9"><path d="M4.5 0.5L0.5 4.5L4.5 8.5" fill="none" stroke="#505050" stroke-width="2"/></svg>
<svg style="position:absolute;left:1352px;top:450px" width="5" height="9" viewBox="0 0 5 9"><path d="M0.5 0.5L4.5 4.5L0.5 8.5" fill="none" stroke="#505050" stroke-width="2"/></svg>
<div style="left:647px;top:463px;width:717px;height:2px;background:#fff;"></div>
<div style="left:647px;top:465px;width:717px;height:2px;background:#909090;"></div>
<div style="left:647px;top:467px;width:717px;height:101px;background:#ffc0c0;"></div>
<div style="left:647px;top:467px;width:717px;height:18px;background:#f0f0f0;"></div>
<div style="left:647px;top:467px;width:717px;height:1px;background:#fff;"></div>
<div style="left:648px;top:468px;width:70px;height:16px;background:#f0f0f0;border-top:1px solid #fff;border-left:1px solid #fff;border-right:2px solid #7a7a7a"></div>
<div class="t" style="left:654px;top:471px;">cod_abas...</div>
<div style="left:718px;top:485px;width:1px;height:83px;background:#f0f0f0;"></div>
<div style="left:718px;top:468px;width:60px;height:16px;background:#f0f0f0;border-top:1px solid #fff;border-left:1px solid #fff;border-right:2px solid #7a7a7a"></div>
<div class="t" style="left:724px;top:471px;">Llera</div>
<div style="left:778px;top:485px;width:1px;height:83px;background:#f0f0f0;"></div>
<div style="left:778px;top:468px;width:70px;height:16px;background:#f0f0f0;border-top:1px solid #fff;border-left:1px solid #fff;border-right:2px solid #7a7a7a"></div>
<div class="t" style="left:784px;top:471px;">nombre_a...</div>
<div style="left:848px;top:485px;width:1px;height:83px;background:#f0f0f0;"></div>
<div style="left:848px;top:468px;width:70px;height:16px;background:#f0f0f0;border-top:1px solid #fff;border-left:1px solid #fff;border-right:2px solid #7a7a7a"></div>
<div class="t" style="left:854px;top:471px;">fecha</div>
<div style="left:918px;top:485px;width:1px;height:83px;background:#f0f0f0;"></div>
<div style="left:918px;top:468px;width:70px;height:16px;background:#f0f0f0;border-top:1px solid #fff;border-left:1px solid #fff;border-right:2px solid #7a7a7a"></div>
<div class="t" style="left:924px;top:471px;">id_usuario</div>
<div style="left:988px;top:485px;width:1px;height:83px;background:#f0f0f0;"></div>
<div style="left:988px;top:468px;width:70px;height:16px;background:#f0f0f0;border-top:1px solid #fff;border-left:1px solid #fff;border-right:2px solid #7a7a7a"></div>
<div class="t" style="left:994px;top:471px;">id_boquer...</div>
<div style="left:1058px;top:485px;width:1px;height:83px;background:#f0f0f0;"></div>
<div style="left:1058px;top:468px;width:70px;height:16px;background:#f0f0f0;border-top:1px solid #fff;border-left:1px solid #fff;border-right:2px solid #7a7a7a"></div>
<div class="t" style="left:1064px;top:471px;">id_regans</div>
<div style="left:1128px;top:485px;width:1px;height:83px;background:#f0f0f0;"></div>
<div style="left:1128px;top:468px;width:70px;height:16px;background:#f0f0f0;border-top:1px solid #fff;border-left:1px solid #fff;border-right:2px solid #7a7a7a"></div>
<div class="t" style="left:1134px;top:471px;">id_finques</div>
<div style="left:1198px;top:485px;width:1px;height:83px;background:#f0f0f0;"></div>
<div style="left:1198px;top:468px;width:70px;height:16px;background:#f0f0f0;border-top:1px solid #fff;border-left:1px solid #fff;border-right:2px solid #7a7a7a"></div>
<div class="t" style="left:1204px;top:471px;">Tipo_Aba...</div>
<div style="left:1268px;top:485px;width:1px;height:83px;background:#f0f0f0;"></div>
<div style="left:1268px;top:468px;width:70px;height:16px;background:#f0f0f0;border-top:1px solid #fff;border-left:1px solid #fff;border-right:2px solid #7a7a7a"></div>
<div class="t" style="left:1274px;top:471px;">Total_hee...</div>
<div style="left:1338px;top:485px;width:1px;height:83px;background:#f0f0f0;"></div>
<div style="left:1338px;top:468px;width:70px;height:16px;background:#f0f0f0;border-top:1px solid #fff;border-left:1px solid #fff;border-right:2px solid #7a7a7a"></div>
<div class="t" style="left:1344px;top:471px;">Exp</div>
<div style="left:1408px;top:485px;width:1px;height:83px;background:#f0f0f0;"></div>
<div style="left:647px;top:483px;width:717px;height:2px;background:#7a7a7a;"></div>
<div style="left:647px;top:486px;width:717px;height:1px;background:#f0f0f0;"></div>
<div style="left:647px;top:501px;width:717px;height:1px;background:#f0f0f0;"></div>
<div style="left:647px;top:516px;width:717px;height:1px;background:#f0f0f0;"></div>
<div style="left:647px;top:531px;width:717px;height:1px;background:#f0f0f0;"></div>
<div style="left:647px;top:546px;width:717px;height:1px;background:#f0f0f0;"></div>
<div style="left:647px;top:561px;width:717px;height:1px;background:#f0f0f0;"></div>
<div style="left:1363px;top:467px;width:1px;height:101px;background:#f0f0f0;"></div>
<div style="left:647px;top:568px;width:717px;height:17px;background:#f0f0f0;"></div>
<div style="left:665px;top:570px;width:640px;height:14px;background:#cdcdcd;"></div>
<svg style="position:absolute;left:654px;top:572px" width="5" height="9" viewBox="0 0 5 9"><path d="M4.5 0.5L0.5 4.5L4.5 8.5" fill="none" stroke="#505050" stroke-width="2"/></svg>
<svg style="position:absolute;left:1352px;top:572px" width="5" height="9" viewBox="0 0 5 9"><path d="M0.5 0.5L4.5 4.5L0.5 8.5" fill="none" stroke="#505050" stroke-width="2"/></svg>
<div style="left:647px;top:585px;width:717px;height:1px;background:#fff;"></div>
<div style="left:647px;top:586px;width:717px;height:2px;background:#909090;"></div>
<div style="left:647px;top:588px;width:717px;height:28px;background:#000080;"></div>
<div style="left:652px;top:595px;width:15px;height:14px;background:#fff;"></div>
<div style="left:652px;top:595px;width:13px;height:13px;background:#fff;border-top:2px solid #8a8a80;border-left:2px solid #8a8a80;border-right:1px solid #e0e0e0;border-bottom:1px solid #e0e0e0"></div>
<svg style="position:absolute;left:654px;top:597px" width="9" height="9" viewBox="0 0 9 9"><path d="M1 4.2L3.5 7L8 1.5" fill="none" stroke="#000" stroke-width="2.2"/></svg>
<div class="t" style="left:670px;top:591px;font-size:20.5px;color:#fff">Rebuts</div>
<div style="left:748px;top:598px;width:258px;height:11px;background:#fff;"></div>
<div class="t" style="left:751px;top:598px;font-size:10.5px">Estats ( Cobrat-0, Impagat-2, Pendent-3,&nbsp; Retomat-4 )</div>
<div style="left:647px;top:616px;width:717px;height:2px;background:#909090;"></div>
<div style="left:647px;top:618px;width:717px;height:100px;background:#ffff80;"></div>
<div style="left:647px;top:618px;width:717px;height:19px;background:#f0f0f0;"></div>
<div style="left:647px;top:618px;width:717px;height:1px;background:#fff;"></div>
<div style="left:648px;top:619px;width:20px;height:16px;background:#f0f0f0;border-top:1px solid #fff;border-left:1px solid #fff;border-right:2px solid #7a7a7a"></div>
<div class="t" style="left:654px;top:623px;">i...</div>
<div style="left:668px;top:637px;width:1px;height:81px;background:#f0f0f0;"></div>
<div style="left:668px;top:619px;width:70px;height:16px;background:#f0f0f0;border-top:1px solid #fff;border-left:1px solid #fff;border-right:2px solid #7a7a7a"></div>
<div class="t" style="left:674px;top:623px;">cod_rebuts</div>
<div style="left:738px;top:637px;width:1px;height:81px;background:#f0f0f0;"></div>
<div style="left:738px;top:619px;width:70px;height:16px;background:#f0f0f0;border-top:1px solid #fff;border-left:1px solid #fff;border-right:2px solid #7a7a7a"></div>
<div class="t" style="left:744px;top:623px;">nombre_r...</div>
<div style="left:808px;top:637px;width:1px;height:81px;background:#f0f0f0;"></div>
<div style="left:808px;top:619px;width:70px;height:16px;background:#f0f0f0;border-top:1px solid #fff;border-left:1px solid #fff;border-right:2px solid #7a7a7a"></div>
<div class="t" style="left:814px;top:623px;">fecha</div>
<div style="left:878px;top:637px;width:1px;height:81px;background:#f0f0f0;"></div>
<div style="left:878px;top:619px;width:70px;height:16px;background:#f0f0f0;border-top:1px solid #fff;border-left:1px solid #fff;border-right:2px solid #7a7a7a"></div>
<div class="t" style="left:884px;top:623px;">id_usuario</div>
<div style="left:948px;top:637px;width:1px;height:81px;background:#f0f0f0;"></div>
<div style="left:948px;top:619px;width:70px;height:16px;background:#f0f0f0;border-top:1px solid #fff;border-left:1px solid #fff;border-right:2px solid #7a7a7a"></div>
<div class="t" style="left:954px;top:623px;">data_conf...</div>
<div style="left:1018px;top:637px;width:1px;height:81px;background:#f0f0f0;"></div>
<div style="left:1018px;top:619px;width:70px;height:16px;background:#f0f0f0;border-top:1px solid #fff;border-left:1px solid #fff;border-right:2px solid #7a7a7a"></div>
<div class="t" style="left:1024px;top:623px;">data_emisio</div>
<div style="left:1088px;top:637px;width:1px;height:81px;background:#f0f0f0;"></div>
<div style="left:1088px;top:619px;width:70px;height:16px;background:#f0f0f0;border-top:1px solid #fff;border-left:1px solid #fff;border-right:2px solid #7a7a7a"></div>
<div class="t" style="left:1094px;top:623px;">data_ven...</div>
<div style="left:1158px;top:637px;width:1px;height:81px;background:#f0f0f0;"></div>
<div style="left:1158px;top:619px;width:70px;height:16px;background:#f0f0f0;border-top:1px solid #fff;border-left:1px solid #fff;border-right:2px solid #7a7a7a"></div>
<div class="t" style="left:1164px;top:623px;">Periode</div>
<div style="left:1228px;top:637px;width:1px;height:81px;background:#f0f0f0;"></div>
<div style="left:1228px;top:619px;width:70px;height:16px;background:#f0f0f0;border-top:1px solid #fff;border-left:1px solid #fff;border-right:2px solid #7a7a7a"></div>
<div class="t" style="left:1234px;top:623px;">estat_rebut</div>
<div style="left:1298px;top:637px;width:1px;height:81px;background:#f0f0f0;"></div>
<div style="left:1298px;top:619px;width:70px;height:16px;background:#f0f0f0;border-top:1px solid #fff;border-left:1px solid #fff;border-right:2px solid #7a7a7a"></div>
<div class="t" style="left:1304px;top:623px;">Import_Rebu</div>
<div style="left:1368px;top:637px;width:1px;height:81px;background:#f0f0f0;"></div>
<div style="left:647px;top:635px;width:717px;height:2px;background:#7a7a7a;"></div>
<div style="left:647px;top:638px;width:717px;height:1px;background:#f0f0f0;"></div>
<div style="left:647px;top:653px;width:717px;height:1px;background:#f0f0f0;"></div>
<div style="left:647px;top:668px;width:717px;height:1px;background:#f0f0f0;"></div>
<div style="left:647px;top:683px;width:717px;height:1px;background:#f0f0f0;"></div>
<div style="left:647px;top:698px;width:717px;height:1px;background:#f0f0f0;"></div>
<div style="left:647px;top:713px;width:717px;height:1px;background:#f0f0f0;"></div>
<div style="left:1363px;top:618px;width:1px;height:100px;background:#f0f0f0;"></div>
<div style="left:647px;top:718px;width:717px;height:18px;background:#f0f0f0;"></div>
<div style="left:665px;top:720px;width:345px;height:14px;background:#cdcdcd;"></div>
<svg style="position:absolute;left:654px;top:722px" width="5" height="9" viewBox="0 0 5 9"><path d="M4.5 0.5L0.5 4.5L4.5 8.5" fill="none" stroke="#505050" stroke-width="2"/></svg>
<svg style="position:absolute;left:1352px;top:722px" width="5" height="9" viewBox="0 0 5 9"><path d="M0.5 0.5L4.5 4.5L0.5 8.5" fill="none" stroke="#505050" stroke-width="2"/></svg>
<div style="left:647px;top:736px;width:717px;height:1px;background:#fff;"></div>
<div style="left:645px;top:255px;width:1px;height:483px;background:#696969;"></div>
<div style="left:646px;top:255px;width:1px;height:483px;background:#a0a0a0;"></div>
<div style="left:647px;top:287px;width:1px;height:450px;background:#a0a0a0;"></div>
<div style="left:1364px;top:255px;width:2px;height:483px;background:#7a7a7a;"></div></body></html>
